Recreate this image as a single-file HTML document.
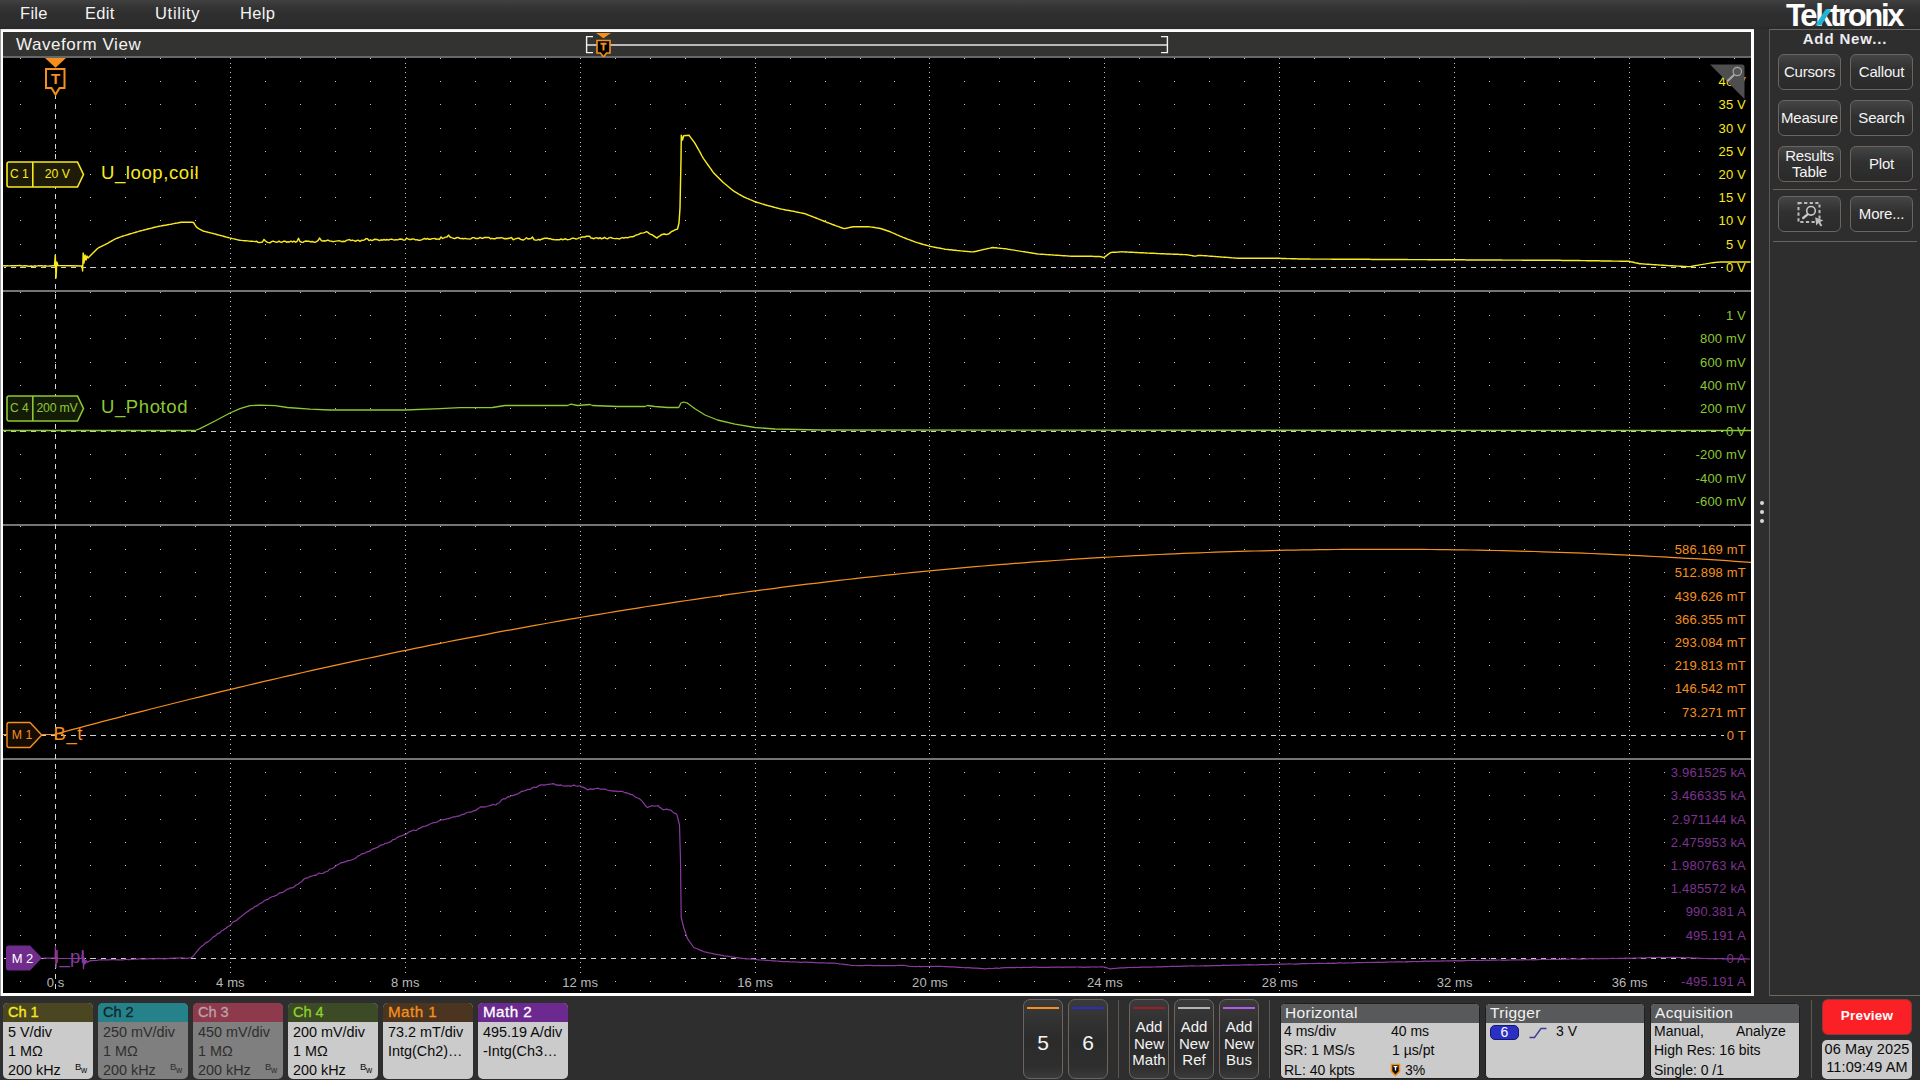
<!DOCTYPE html><html><head><meta charset="utf-8"><title>Waveform View</title><style>
html,body{margin:0;padding:0}
body{width:1920px;height:1080px;overflow:hidden;background:#2e2e2e;font-family:"Liberation Sans",sans-serif;color:#f2f2f2;position:relative}
.abs{position:absolute}
#menubar{left:0;top:0;width:1920px;height:29px;background:linear-gradient(#414141,#343434 25%,#2e2e2e 50%,#2e2e2e 85%,#292929)}
#menubar span{position:absolute;top:4.2px;font-size:16.5px;letter-spacing:.3px;color:#f4f4f4}
#wvborder{left:0;top:29px;width:1754px;height:967px;background:linear-gradient(#e6e6e8,#fff 2px,#fff);box-sizing:border-box;border-left:1px solid #9a9ca0}
#wvtitle{left:3px;top:32px;width:1748px;height:24px;background:#333331;border-bottom:1px solid #66686b}
#wvtitle span{position:absolute;left:13px;top:2.8px;font-size:17px;letter-spacing:.55px;color:#f2f2f2}
#side{left:1769px;top:29px;width:160px;height:967px;border:1px solid #6e6660;border-left-color:#57595c;background:#2e2e2e;box-sizing:border-box}
.btn{position:absolute;width:63px;height:36px;box-sizing:border-box;border:1px solid #6e645e;border-radius:6px;background:linear-gradient(#444546,#303030 45%,#2a2a2a);color:#f4f4f4;font-size:15px;text-align:center;line-height:34px;letter-spacing:-.2px}
.sep{position:absolute;height:1px;background:#6a625c;left:1773px;width:144px}

.badge{position:absolute;top:1003px;width:90px;height:76px;border-radius:5px;overflow:hidden;font-size:14.4px;white-space:nowrap}
.bh{position:absolute;left:0;top:0;width:100%;height:19px;font-size:14.6px;line-height:19px;padding-left:5px;box-sizing:border-box;letter-spacing:-.1px;-webkit-text-stroke:.3px currentColor}
.bl{position:absolute;left:5px;line-height:19px}
.bw{position:absolute;left:72px;top:58px;font-size:9.5px;line-height:12px;letter-spacing:-.3px}
.bw span{font-size:8.5px;position:relative;top:3px}
.tall{position:absolute;top:999px;height:80px;box-sizing:border-box;border:1px solid #6e645e;border-radius:7px;background:linear-gradient(#3a3a3a,#2b2b2b 50%,#2e2e2e 85%,#3a3a3a);color:#f4f4f4;text-align:center}
.tall i{position:absolute;left:3px;right:3px;top:7px;height:2px}
.tall b{font-weight:normal;display:block}
.tall .num{font-size:21px;line-height:24px;margin-top:30.5px}
.tall .add{font-size:15px;line-height:16.2px;margin-top:19.4px}
.vsep{position:absolute;top:1000px;width:1px;height:78px;background:#5d5651}
.info{position:absolute;top:1003px;height:76px;border-radius:5px;overflow:hidden;background:#cbcbcb;color:#0a0a0a;font-size:14px;white-space:nowrap;border:1px solid #1e1e1e;box-sizing:border-box}
.ih{position:absolute;left:0;top:0;width:100%;height:19px;background:#58595b;color:#f2f2f2;font-size:15.5px;line-height:18px;padding-left:4px;box-sizing:border-box;letter-spacing:.3px}
.il{position:absolute;line-height:19px}
</style></head><body>
<div id="menubar" class="abs"><span style="left:20px">File</span><span style="left:85px">Edit</span><span style="left:155px;letter-spacing:.7px">Utility</span><span style="left:240px">Help</span></div>
<div id="wvborder" class="abs"></div>
<div id="wvtitle" class="abs"><span>Waveform View</span></div>
<svg class="abs" style="left:580px;top:32px" width="600" height="26"><path d="M7 13H587" stroke="#b9b9b9" stroke-width="2"/><path d="M593 4.6H586.6V20.6H593M1161 4.6H1167.4V20.6H1161" transform="translate(-580 0)" fill="none" stroke="#f2f2f2" stroke-width="1.4"/><path d="M16 1H31L23.5 6.2Z" fill="#f5901e"/><path d="M17 8.5H30V21H26.5L23.5 25L20.5 21H17Z" fill="#000" stroke="#f5901e" stroke-width="1.6"/><path d="M20.5 11.8H26.5M23.5 11.8V18.5" stroke="#f5901e" stroke-width="2"/></svg>
<svg id="plot" width="1754" height="940" viewBox="0 57 1754 940" style="position:absolute;left:0;top:57px" font-family="Liberation Sans, sans-serif" font-size="13" letter-spacing="0.2">
<rect x="3" y="57" width="1748" height="936" fill="#000"/>
<path d="M20 58h1v1h-1zM55 58h1v1h-1zM90 58h1v1h-1zM125 58h1v1h-1zM160 58h1v1h-1zM195 58h1v1h-1zM230 58h1v1h-1zM265 58h1v1h-1zM300 58h1v1h-1zM335 58h1v1h-1zM370 58h1v1h-1zM405 58h1v1h-1zM440 58h1v1h-1zM475 58h1v1h-1zM510 58h1v1h-1zM545 58h1v1h-1zM580 58h1v1h-1zM615 58h1v1h-1zM650 58h1v1h-1zM685 58h1v1h-1zM720 58h1v1h-1zM755 58h1v1h-1zM790 58h1v1h-1zM825 58h1v1h-1zM860 58h1v1h-1zM894 58h1v1h-1zM929 58h1v1h-1zM964 58h1v1h-1zM999 58h1v1h-1zM1034 58h1v1h-1zM1069 58h1v1h-1zM1104 58h1v1h-1zM1139 58h1v1h-1zM1174 58h1v1h-1zM1209 58h1v1h-1zM1244 58h1v1h-1zM1279 58h1v1h-1zM1314 58h1v1h-1zM1349 58h1v1h-1zM1384 58h1v1h-1zM1419 58h1v1h-1zM1454 58h1v1h-1zM1489 58h1v1h-1zM1524 58h1v1h-1zM1559 58h1v1h-1zM1594 58h1v1h-1zM1629 58h1v1h-1zM1664 58h1v1h-1zM1699 58h1v1h-1zM1734 58h1v1h-1zM20 81h1v1h-1zM55 81h1v1h-1zM90 81h1v1h-1zM125 81h1v1h-1zM160 81h1v1h-1zM195 81h1v1h-1zM230 81h1v1h-1zM265 81h1v1h-1zM300 81h1v1h-1zM335 81h1v1h-1zM370 81h1v1h-1zM405 81h1v1h-1zM440 81h1v1h-1zM475 81h1v1h-1zM510 81h1v1h-1zM545 81h1v1h-1zM580 81h1v1h-1zM615 81h1v1h-1zM650 81h1v1h-1zM685 81h1v1h-1zM720 81h1v1h-1zM755 81h1v1h-1zM790 81h1v1h-1zM825 81h1v1h-1zM860 81h1v1h-1zM894 81h1v1h-1zM929 81h1v1h-1zM964 81h1v1h-1zM999 81h1v1h-1zM1034 81h1v1h-1zM1069 81h1v1h-1zM1104 81h1v1h-1zM1139 81h1v1h-1zM1174 81h1v1h-1zM1209 81h1v1h-1zM1244 81h1v1h-1zM1279 81h1v1h-1zM1314 81h1v1h-1zM1349 81h1v1h-1zM1384 81h1v1h-1zM1419 81h1v1h-1zM1454 81h1v1h-1zM1489 81h1v1h-1zM1524 81h1v1h-1zM1559 81h1v1h-1zM1594 81h1v1h-1zM1629 81h1v1h-1zM1664 81h1v1h-1zM1699 81h1v1h-1zM1734 81h1v1h-1zM20 104h1v1h-1zM55 104h1v1h-1zM90 104h1v1h-1zM125 104h1v1h-1zM160 104h1v1h-1zM195 104h1v1h-1zM230 104h1v1h-1zM265 104h1v1h-1zM300 104h1v1h-1zM335 104h1v1h-1zM370 104h1v1h-1zM405 104h1v1h-1zM440 104h1v1h-1zM475 104h1v1h-1zM510 104h1v1h-1zM545 104h1v1h-1zM580 104h1v1h-1zM615 104h1v1h-1zM650 104h1v1h-1zM685 104h1v1h-1zM720 104h1v1h-1zM755 104h1v1h-1zM790 104h1v1h-1zM825 104h1v1h-1zM860 104h1v1h-1zM894 104h1v1h-1zM929 104h1v1h-1zM964 104h1v1h-1zM999 104h1v1h-1zM1034 104h1v1h-1zM1069 104h1v1h-1zM1104 104h1v1h-1zM1139 104h1v1h-1zM1174 104h1v1h-1zM1209 104h1v1h-1zM1244 104h1v1h-1zM1279 104h1v1h-1zM1314 104h1v1h-1zM1349 104h1v1h-1zM1384 104h1v1h-1zM1419 104h1v1h-1zM1454 104h1v1h-1zM1489 104h1v1h-1zM1524 104h1v1h-1zM1559 104h1v1h-1zM1594 104h1v1h-1zM1629 104h1v1h-1zM1664 104h1v1h-1zM1699 104h1v1h-1zM1734 104h1v1h-1zM20 128h1v1h-1zM55 128h1v1h-1zM90 128h1v1h-1zM125 128h1v1h-1zM160 128h1v1h-1zM195 128h1v1h-1zM230 128h1v1h-1zM265 128h1v1h-1zM300 128h1v1h-1zM335 128h1v1h-1zM370 128h1v1h-1zM405 128h1v1h-1zM440 128h1v1h-1zM475 128h1v1h-1zM510 128h1v1h-1zM545 128h1v1h-1zM580 128h1v1h-1zM615 128h1v1h-1zM650 128h1v1h-1zM685 128h1v1h-1zM720 128h1v1h-1zM755 128h1v1h-1zM790 128h1v1h-1zM825 128h1v1h-1zM860 128h1v1h-1zM894 128h1v1h-1zM929 128h1v1h-1zM964 128h1v1h-1zM999 128h1v1h-1zM1034 128h1v1h-1zM1069 128h1v1h-1zM1104 128h1v1h-1zM1139 128h1v1h-1zM1174 128h1v1h-1zM1209 128h1v1h-1zM1244 128h1v1h-1zM1279 128h1v1h-1zM1314 128h1v1h-1zM1349 128h1v1h-1zM1384 128h1v1h-1zM1419 128h1v1h-1zM1454 128h1v1h-1zM1489 128h1v1h-1zM1524 128h1v1h-1zM1559 128h1v1h-1zM1594 128h1v1h-1zM1629 128h1v1h-1zM1664 128h1v1h-1zM1699 128h1v1h-1zM1734 128h1v1h-1zM20 151h1v1h-1zM55 151h1v1h-1zM90 151h1v1h-1zM125 151h1v1h-1zM160 151h1v1h-1zM195 151h1v1h-1zM230 151h1v1h-1zM265 151h1v1h-1zM300 151h1v1h-1zM335 151h1v1h-1zM370 151h1v1h-1zM405 151h1v1h-1zM440 151h1v1h-1zM475 151h1v1h-1zM510 151h1v1h-1zM545 151h1v1h-1zM580 151h1v1h-1zM615 151h1v1h-1zM650 151h1v1h-1zM685 151h1v1h-1zM720 151h1v1h-1zM755 151h1v1h-1zM790 151h1v1h-1zM825 151h1v1h-1zM860 151h1v1h-1zM894 151h1v1h-1zM929 151h1v1h-1zM964 151h1v1h-1zM999 151h1v1h-1zM1034 151h1v1h-1zM1069 151h1v1h-1zM1104 151h1v1h-1zM1139 151h1v1h-1zM1174 151h1v1h-1zM1209 151h1v1h-1zM1244 151h1v1h-1zM1279 151h1v1h-1zM1314 151h1v1h-1zM1349 151h1v1h-1zM1384 151h1v1h-1zM1419 151h1v1h-1zM1454 151h1v1h-1zM1489 151h1v1h-1zM1524 151h1v1h-1zM1559 151h1v1h-1zM1594 151h1v1h-1zM1629 151h1v1h-1zM1664 151h1v1h-1zM1699 151h1v1h-1zM1734 151h1v1h-1zM20 174h1v1h-1zM55 174h1v1h-1zM90 174h1v1h-1zM125 174h1v1h-1zM160 174h1v1h-1zM195 174h1v1h-1zM230 174h1v1h-1zM265 174h1v1h-1zM300 174h1v1h-1zM335 174h1v1h-1zM370 174h1v1h-1zM405 174h1v1h-1zM440 174h1v1h-1zM475 174h1v1h-1zM510 174h1v1h-1zM545 174h1v1h-1zM580 174h1v1h-1zM615 174h1v1h-1zM650 174h1v1h-1zM685 174h1v1h-1zM720 174h1v1h-1zM755 174h1v1h-1zM790 174h1v1h-1zM825 174h1v1h-1zM860 174h1v1h-1zM894 174h1v1h-1zM929 174h1v1h-1zM964 174h1v1h-1zM999 174h1v1h-1zM1034 174h1v1h-1zM1069 174h1v1h-1zM1104 174h1v1h-1zM1139 174h1v1h-1zM1174 174h1v1h-1zM1209 174h1v1h-1zM1244 174h1v1h-1zM1279 174h1v1h-1zM1314 174h1v1h-1zM1349 174h1v1h-1zM1384 174h1v1h-1zM1419 174h1v1h-1zM1454 174h1v1h-1zM1489 174h1v1h-1zM1524 174h1v1h-1zM1559 174h1v1h-1zM1594 174h1v1h-1zM1629 174h1v1h-1zM1664 174h1v1h-1zM1699 174h1v1h-1zM1734 174h1v1h-1zM20 197h1v1h-1zM55 197h1v1h-1zM90 197h1v1h-1zM125 197h1v1h-1zM160 197h1v1h-1zM195 197h1v1h-1zM230 197h1v1h-1zM265 197h1v1h-1zM300 197h1v1h-1zM335 197h1v1h-1zM370 197h1v1h-1zM405 197h1v1h-1zM440 197h1v1h-1zM475 197h1v1h-1zM510 197h1v1h-1zM545 197h1v1h-1zM580 197h1v1h-1zM615 197h1v1h-1zM650 197h1v1h-1zM685 197h1v1h-1zM720 197h1v1h-1zM755 197h1v1h-1zM790 197h1v1h-1zM825 197h1v1h-1zM860 197h1v1h-1zM894 197h1v1h-1zM929 197h1v1h-1zM964 197h1v1h-1zM999 197h1v1h-1zM1034 197h1v1h-1zM1069 197h1v1h-1zM1104 197h1v1h-1zM1139 197h1v1h-1zM1174 197h1v1h-1zM1209 197h1v1h-1zM1244 197h1v1h-1zM1279 197h1v1h-1zM1314 197h1v1h-1zM1349 197h1v1h-1zM1384 197h1v1h-1zM1419 197h1v1h-1zM1454 197h1v1h-1zM1489 197h1v1h-1zM1524 197h1v1h-1zM1559 197h1v1h-1zM1594 197h1v1h-1zM1629 197h1v1h-1zM1664 197h1v1h-1zM1699 197h1v1h-1zM1734 197h1v1h-1zM20 220h1v1h-1zM55 220h1v1h-1zM90 220h1v1h-1zM125 220h1v1h-1zM160 220h1v1h-1zM195 220h1v1h-1zM230 220h1v1h-1zM265 220h1v1h-1zM300 220h1v1h-1zM335 220h1v1h-1zM370 220h1v1h-1zM405 220h1v1h-1zM440 220h1v1h-1zM475 220h1v1h-1zM510 220h1v1h-1zM545 220h1v1h-1zM580 220h1v1h-1zM615 220h1v1h-1zM650 220h1v1h-1zM685 220h1v1h-1zM720 220h1v1h-1zM755 220h1v1h-1zM790 220h1v1h-1zM825 220h1v1h-1zM860 220h1v1h-1zM894 220h1v1h-1zM929 220h1v1h-1zM964 220h1v1h-1zM999 220h1v1h-1zM1034 220h1v1h-1zM1069 220h1v1h-1zM1104 220h1v1h-1zM1139 220h1v1h-1zM1174 220h1v1h-1zM1209 220h1v1h-1zM1244 220h1v1h-1zM1279 220h1v1h-1zM1314 220h1v1h-1zM1349 220h1v1h-1zM1384 220h1v1h-1zM1419 220h1v1h-1zM1454 220h1v1h-1zM1489 220h1v1h-1zM1524 220h1v1h-1zM1559 220h1v1h-1zM1594 220h1v1h-1zM1629 220h1v1h-1zM1664 220h1v1h-1zM1699 220h1v1h-1zM1734 220h1v1h-1zM20 244h1v1h-1zM55 244h1v1h-1zM90 244h1v1h-1zM125 244h1v1h-1zM160 244h1v1h-1zM195 244h1v1h-1zM230 244h1v1h-1zM265 244h1v1h-1zM300 244h1v1h-1zM335 244h1v1h-1zM370 244h1v1h-1zM405 244h1v1h-1zM440 244h1v1h-1zM475 244h1v1h-1zM510 244h1v1h-1zM545 244h1v1h-1zM580 244h1v1h-1zM615 244h1v1h-1zM650 244h1v1h-1zM685 244h1v1h-1zM720 244h1v1h-1zM755 244h1v1h-1zM790 244h1v1h-1zM825 244h1v1h-1zM860 244h1v1h-1zM894 244h1v1h-1zM929 244h1v1h-1zM964 244h1v1h-1zM999 244h1v1h-1zM1034 244h1v1h-1zM1069 244h1v1h-1zM1104 244h1v1h-1zM1139 244h1v1h-1zM1174 244h1v1h-1zM1209 244h1v1h-1zM1244 244h1v1h-1zM1279 244h1v1h-1zM1314 244h1v1h-1zM1349 244h1v1h-1zM1384 244h1v1h-1zM1419 244h1v1h-1zM1454 244h1v1h-1zM1489 244h1v1h-1zM1524 244h1v1h-1zM1559 244h1v1h-1zM1594 244h1v1h-1zM1629 244h1v1h-1zM1664 244h1v1h-1zM1699 244h1v1h-1zM1734 244h1v1h-1zM20 267h1v1h-1zM55 267h1v1h-1zM90 267h1v1h-1zM125 267h1v1h-1zM160 267h1v1h-1zM195 267h1v1h-1zM230 267h1v1h-1zM265 267h1v1h-1zM300 267h1v1h-1zM335 267h1v1h-1zM370 267h1v1h-1zM405 267h1v1h-1zM440 267h1v1h-1zM475 267h1v1h-1zM510 267h1v1h-1zM545 267h1v1h-1zM580 267h1v1h-1zM615 267h1v1h-1zM650 267h1v1h-1zM685 267h1v1h-1zM720 267h1v1h-1zM755 267h1v1h-1zM790 267h1v1h-1zM825 267h1v1h-1zM860 267h1v1h-1zM894 267h1v1h-1zM929 267h1v1h-1zM964 267h1v1h-1zM999 267h1v1h-1zM1034 267h1v1h-1zM1069 267h1v1h-1zM1104 267h1v1h-1zM1139 267h1v1h-1zM1174 267h1v1h-1zM1209 267h1v1h-1zM1244 267h1v1h-1zM1279 267h1v1h-1zM1314 267h1v1h-1zM1349 267h1v1h-1zM1384 267h1v1h-1zM1419 267h1v1h-1zM1454 267h1v1h-1zM1489 267h1v1h-1zM1524 267h1v1h-1zM1559 267h1v1h-1zM1594 267h1v1h-1zM1629 267h1v1h-1zM1664 267h1v1h-1zM1699 267h1v1h-1zM1734 267h1v1h-1zM230 58h1v1h-1zM405 58h1v1h-1zM580 58h1v1h-1zM755 58h1v1h-1zM929 58h1v1h-1zM1104 58h1v1h-1zM1279 58h1v1h-1zM1454 58h1v1h-1zM1629 58h1v1h-1zM230 63h1v1h-1zM405 63h1v1h-1zM580 63h1v1h-1zM755 63h1v1h-1zM929 63h1v1h-1zM1104 63h1v1h-1zM1279 63h1v1h-1zM1454 63h1v1h-1zM1629 63h1v1h-1zM230 67h1v1h-1zM405 67h1v1h-1zM580 67h1v1h-1zM755 67h1v1h-1zM929 67h1v1h-1zM1104 67h1v1h-1zM1279 67h1v1h-1zM1454 67h1v1h-1zM1629 67h1v1h-1zM230 72h1v1h-1zM405 72h1v1h-1zM580 72h1v1h-1zM755 72h1v1h-1zM929 72h1v1h-1zM1104 72h1v1h-1zM1279 72h1v1h-1zM1454 72h1v1h-1zM1629 72h1v1h-1zM230 77h1v1h-1zM405 77h1v1h-1zM580 77h1v1h-1zM755 77h1v1h-1zM929 77h1v1h-1zM1104 77h1v1h-1zM1279 77h1v1h-1zM1454 77h1v1h-1zM1629 77h1v1h-1zM230 81h1v1h-1zM405 81h1v1h-1zM580 81h1v1h-1zM755 81h1v1h-1zM929 81h1v1h-1zM1104 81h1v1h-1zM1279 81h1v1h-1zM1454 81h1v1h-1zM1629 81h1v1h-1zM230 86h1v1h-1zM405 86h1v1h-1zM580 86h1v1h-1zM755 86h1v1h-1zM929 86h1v1h-1zM1104 86h1v1h-1zM1279 86h1v1h-1zM1454 86h1v1h-1zM1629 86h1v1h-1zM230 90h1v1h-1zM405 90h1v1h-1zM580 90h1v1h-1zM755 90h1v1h-1zM929 90h1v1h-1zM1104 90h1v1h-1zM1279 90h1v1h-1zM1454 90h1v1h-1zM1629 90h1v1h-1zM230 95h1v1h-1zM405 95h1v1h-1zM580 95h1v1h-1zM755 95h1v1h-1zM929 95h1v1h-1zM1104 95h1v1h-1zM1279 95h1v1h-1zM1454 95h1v1h-1zM1629 95h1v1h-1zM230 100h1v1h-1zM405 100h1v1h-1zM580 100h1v1h-1zM755 100h1v1h-1zM929 100h1v1h-1zM1104 100h1v1h-1zM1279 100h1v1h-1zM1454 100h1v1h-1zM1629 100h1v1h-1zM230 104h1v1h-1zM405 104h1v1h-1zM580 104h1v1h-1zM755 104h1v1h-1zM929 104h1v1h-1zM1104 104h1v1h-1zM1279 104h1v1h-1zM1454 104h1v1h-1zM1629 104h1v1h-1zM230 109h1v1h-1zM405 109h1v1h-1zM580 109h1v1h-1zM755 109h1v1h-1zM929 109h1v1h-1zM1104 109h1v1h-1zM1279 109h1v1h-1zM1454 109h1v1h-1zM1629 109h1v1h-1zM230 114h1v1h-1zM405 114h1v1h-1zM580 114h1v1h-1zM755 114h1v1h-1zM929 114h1v1h-1zM1104 114h1v1h-1zM1279 114h1v1h-1zM1454 114h1v1h-1zM1629 114h1v1h-1zM230 118h1v1h-1zM405 118h1v1h-1zM580 118h1v1h-1zM755 118h1v1h-1zM929 118h1v1h-1zM1104 118h1v1h-1zM1279 118h1v1h-1zM1454 118h1v1h-1zM1629 118h1v1h-1zM230 123h1v1h-1zM405 123h1v1h-1zM580 123h1v1h-1zM755 123h1v1h-1zM929 123h1v1h-1zM1104 123h1v1h-1zM1279 123h1v1h-1zM1454 123h1v1h-1zM1629 123h1v1h-1zM230 128h1v1h-1zM405 128h1v1h-1zM580 128h1v1h-1zM755 128h1v1h-1zM929 128h1v1h-1zM1104 128h1v1h-1zM1279 128h1v1h-1zM1454 128h1v1h-1zM1629 128h1v1h-1zM230 132h1v1h-1zM405 132h1v1h-1zM580 132h1v1h-1zM755 132h1v1h-1zM929 132h1v1h-1zM1104 132h1v1h-1zM1279 132h1v1h-1zM1454 132h1v1h-1zM1629 132h1v1h-1zM230 137h1v1h-1zM405 137h1v1h-1zM580 137h1v1h-1zM755 137h1v1h-1zM929 137h1v1h-1zM1104 137h1v1h-1zM1279 137h1v1h-1zM1454 137h1v1h-1zM1629 137h1v1h-1zM230 142h1v1h-1zM405 142h1v1h-1zM580 142h1v1h-1zM755 142h1v1h-1zM929 142h1v1h-1zM1104 142h1v1h-1zM1279 142h1v1h-1zM1454 142h1v1h-1zM1629 142h1v1h-1zM230 146h1v1h-1zM405 146h1v1h-1zM580 146h1v1h-1zM755 146h1v1h-1zM929 146h1v1h-1zM1104 146h1v1h-1zM1279 146h1v1h-1zM1454 146h1v1h-1zM1629 146h1v1h-1zM230 151h1v1h-1zM405 151h1v1h-1zM580 151h1v1h-1zM755 151h1v1h-1zM929 151h1v1h-1zM1104 151h1v1h-1zM1279 151h1v1h-1zM1454 151h1v1h-1zM1629 151h1v1h-1zM230 155h1v1h-1zM405 155h1v1h-1zM580 155h1v1h-1zM755 155h1v1h-1zM929 155h1v1h-1zM1104 155h1v1h-1zM1279 155h1v1h-1zM1454 155h1v1h-1zM1629 155h1v1h-1zM230 160h1v1h-1zM405 160h1v1h-1zM580 160h1v1h-1zM755 160h1v1h-1zM929 160h1v1h-1zM1104 160h1v1h-1zM1279 160h1v1h-1zM1454 160h1v1h-1zM1629 160h1v1h-1zM230 165h1v1h-1zM405 165h1v1h-1zM580 165h1v1h-1zM755 165h1v1h-1zM929 165h1v1h-1zM1104 165h1v1h-1zM1279 165h1v1h-1zM1454 165h1v1h-1zM1629 165h1v1h-1zM230 169h1v1h-1zM405 169h1v1h-1zM580 169h1v1h-1zM755 169h1v1h-1zM929 169h1v1h-1zM1104 169h1v1h-1zM1279 169h1v1h-1zM1454 169h1v1h-1zM1629 169h1v1h-1zM230 174h1v1h-1zM405 174h1v1h-1zM580 174h1v1h-1zM755 174h1v1h-1zM929 174h1v1h-1zM1104 174h1v1h-1zM1279 174h1v1h-1zM1454 174h1v1h-1zM1629 174h1v1h-1zM230 179h1v1h-1zM405 179h1v1h-1zM580 179h1v1h-1zM755 179h1v1h-1zM929 179h1v1h-1zM1104 179h1v1h-1zM1279 179h1v1h-1zM1454 179h1v1h-1zM1629 179h1v1h-1zM230 183h1v1h-1zM405 183h1v1h-1zM580 183h1v1h-1zM755 183h1v1h-1zM929 183h1v1h-1zM1104 183h1v1h-1zM1279 183h1v1h-1zM1454 183h1v1h-1zM1629 183h1v1h-1zM230 188h1v1h-1zM405 188h1v1h-1zM580 188h1v1h-1zM755 188h1v1h-1zM929 188h1v1h-1zM1104 188h1v1h-1zM1279 188h1v1h-1zM1454 188h1v1h-1zM1629 188h1v1h-1zM230 193h1v1h-1zM405 193h1v1h-1zM580 193h1v1h-1zM755 193h1v1h-1zM929 193h1v1h-1zM1104 193h1v1h-1zM1279 193h1v1h-1zM1454 193h1v1h-1zM1629 193h1v1h-1zM230 197h1v1h-1zM405 197h1v1h-1zM580 197h1v1h-1zM755 197h1v1h-1zM929 197h1v1h-1zM1104 197h1v1h-1zM1279 197h1v1h-1zM1454 197h1v1h-1zM1629 197h1v1h-1zM230 202h1v1h-1zM405 202h1v1h-1zM580 202h1v1h-1zM755 202h1v1h-1zM929 202h1v1h-1zM1104 202h1v1h-1zM1279 202h1v1h-1zM1454 202h1v1h-1zM1629 202h1v1h-1zM230 206h1v1h-1zM405 206h1v1h-1zM580 206h1v1h-1zM755 206h1v1h-1zM929 206h1v1h-1zM1104 206h1v1h-1zM1279 206h1v1h-1zM1454 206h1v1h-1zM1629 206h1v1h-1zM230 211h1v1h-1zM405 211h1v1h-1zM580 211h1v1h-1zM755 211h1v1h-1zM929 211h1v1h-1zM1104 211h1v1h-1zM1279 211h1v1h-1zM1454 211h1v1h-1zM1629 211h1v1h-1zM230 216h1v1h-1zM405 216h1v1h-1zM580 216h1v1h-1zM755 216h1v1h-1zM929 216h1v1h-1zM1104 216h1v1h-1zM1279 216h1v1h-1zM1454 216h1v1h-1zM1629 216h1v1h-1zM230 220h1v1h-1zM405 220h1v1h-1zM580 220h1v1h-1zM755 220h1v1h-1zM929 220h1v1h-1zM1104 220h1v1h-1zM1279 220h1v1h-1zM1454 220h1v1h-1zM1629 220h1v1h-1zM230 225h1v1h-1zM405 225h1v1h-1zM580 225h1v1h-1zM755 225h1v1h-1zM929 225h1v1h-1zM1104 225h1v1h-1zM1279 225h1v1h-1zM1454 225h1v1h-1zM1629 225h1v1h-1zM230 230h1v1h-1zM405 230h1v1h-1zM580 230h1v1h-1zM755 230h1v1h-1zM929 230h1v1h-1zM1104 230h1v1h-1zM1279 230h1v1h-1zM1454 230h1v1h-1zM1629 230h1v1h-1zM230 234h1v1h-1zM405 234h1v1h-1zM580 234h1v1h-1zM755 234h1v1h-1zM929 234h1v1h-1zM1104 234h1v1h-1zM1279 234h1v1h-1zM1454 234h1v1h-1zM1629 234h1v1h-1zM230 239h1v1h-1zM405 239h1v1h-1zM580 239h1v1h-1zM755 239h1v1h-1zM929 239h1v1h-1zM1104 239h1v1h-1zM1279 239h1v1h-1zM1454 239h1v1h-1zM1629 239h1v1h-1zM230 244h1v1h-1zM405 244h1v1h-1zM580 244h1v1h-1zM755 244h1v1h-1zM929 244h1v1h-1zM1104 244h1v1h-1zM1279 244h1v1h-1zM1454 244h1v1h-1zM1629 244h1v1h-1zM230 248h1v1h-1zM405 248h1v1h-1zM580 248h1v1h-1zM755 248h1v1h-1zM929 248h1v1h-1zM1104 248h1v1h-1zM1279 248h1v1h-1zM1454 248h1v1h-1zM1629 248h1v1h-1zM230 253h1v1h-1zM405 253h1v1h-1zM580 253h1v1h-1zM755 253h1v1h-1zM929 253h1v1h-1zM1104 253h1v1h-1zM1279 253h1v1h-1zM1454 253h1v1h-1zM1629 253h1v1h-1zM230 258h1v1h-1zM405 258h1v1h-1zM580 258h1v1h-1zM755 258h1v1h-1zM929 258h1v1h-1zM1104 258h1v1h-1zM1279 258h1v1h-1zM1454 258h1v1h-1zM1629 258h1v1h-1zM230 262h1v1h-1zM405 262h1v1h-1zM580 262h1v1h-1zM755 262h1v1h-1zM929 262h1v1h-1zM1104 262h1v1h-1zM1279 262h1v1h-1zM1454 262h1v1h-1zM1629 262h1v1h-1zM230 267h1v1h-1zM405 267h1v1h-1zM580 267h1v1h-1zM755 267h1v1h-1zM929 267h1v1h-1zM1104 267h1v1h-1zM1279 267h1v1h-1zM1454 267h1v1h-1zM1629 267h1v1h-1zM230 271h1v1h-1zM405 271h1v1h-1zM580 271h1v1h-1zM755 271h1v1h-1zM929 271h1v1h-1zM1104 271h1v1h-1zM1279 271h1v1h-1zM1454 271h1v1h-1zM1629 271h1v1h-1zM230 276h1v1h-1zM405 276h1v1h-1zM580 276h1v1h-1zM755 276h1v1h-1zM929 276h1v1h-1zM1104 276h1v1h-1zM1279 276h1v1h-1zM1454 276h1v1h-1zM1629 276h1v1h-1zM230 281h1v1h-1zM405 281h1v1h-1zM580 281h1v1h-1zM755 281h1v1h-1zM929 281h1v1h-1zM1104 281h1v1h-1zM1279 281h1v1h-1zM1454 281h1v1h-1zM1629 281h1v1h-1zM230 285h1v1h-1zM405 285h1v1h-1zM580 285h1v1h-1zM755 285h1v1h-1zM929 285h1v1h-1zM1104 285h1v1h-1zM1279 285h1v1h-1zM1454 285h1v1h-1zM1629 285h1v1h-1zM20 292h1v1h-1zM55 292h1v1h-1zM90 292h1v1h-1zM125 292h1v1h-1zM160 292h1v1h-1zM195 292h1v1h-1zM230 292h1v1h-1zM265 292h1v1h-1zM300 292h1v1h-1zM335 292h1v1h-1zM370 292h1v1h-1zM405 292h1v1h-1zM440 292h1v1h-1zM475 292h1v1h-1zM510 292h1v1h-1zM545 292h1v1h-1zM580 292h1v1h-1zM615 292h1v1h-1zM650 292h1v1h-1zM685 292h1v1h-1zM720 292h1v1h-1zM755 292h1v1h-1zM790 292h1v1h-1zM825 292h1v1h-1zM860 292h1v1h-1zM894 292h1v1h-1zM929 292h1v1h-1zM964 292h1v1h-1zM999 292h1v1h-1zM1034 292h1v1h-1zM1069 292h1v1h-1zM1104 292h1v1h-1zM1139 292h1v1h-1zM1174 292h1v1h-1zM1209 292h1v1h-1zM1244 292h1v1h-1zM1279 292h1v1h-1zM1314 292h1v1h-1zM1349 292h1v1h-1zM1384 292h1v1h-1zM1419 292h1v1h-1zM1454 292h1v1h-1zM1489 292h1v1h-1zM1524 292h1v1h-1zM1559 292h1v1h-1zM1594 292h1v1h-1zM1629 292h1v1h-1zM1664 292h1v1h-1zM1699 292h1v1h-1zM1734 292h1v1h-1zM20 315h1v1h-1zM55 315h1v1h-1zM90 315h1v1h-1zM125 315h1v1h-1zM160 315h1v1h-1zM195 315h1v1h-1zM230 315h1v1h-1zM265 315h1v1h-1zM300 315h1v1h-1zM335 315h1v1h-1zM370 315h1v1h-1zM405 315h1v1h-1zM440 315h1v1h-1zM475 315h1v1h-1zM510 315h1v1h-1zM545 315h1v1h-1zM580 315h1v1h-1zM615 315h1v1h-1zM650 315h1v1h-1zM685 315h1v1h-1zM720 315h1v1h-1zM755 315h1v1h-1zM790 315h1v1h-1zM825 315h1v1h-1zM860 315h1v1h-1zM894 315h1v1h-1zM929 315h1v1h-1zM964 315h1v1h-1zM999 315h1v1h-1zM1034 315h1v1h-1zM1069 315h1v1h-1zM1104 315h1v1h-1zM1139 315h1v1h-1zM1174 315h1v1h-1zM1209 315h1v1h-1zM1244 315h1v1h-1zM1279 315h1v1h-1zM1314 315h1v1h-1zM1349 315h1v1h-1zM1384 315h1v1h-1zM1419 315h1v1h-1zM1454 315h1v1h-1zM1489 315h1v1h-1zM1524 315h1v1h-1zM1559 315h1v1h-1zM1594 315h1v1h-1zM1629 315h1v1h-1zM1664 315h1v1h-1zM1699 315h1v1h-1zM1734 315h1v1h-1zM20 338h1v1h-1zM55 338h1v1h-1zM90 338h1v1h-1zM125 338h1v1h-1zM160 338h1v1h-1zM195 338h1v1h-1zM230 338h1v1h-1zM265 338h1v1h-1zM300 338h1v1h-1zM335 338h1v1h-1zM370 338h1v1h-1zM405 338h1v1h-1zM440 338h1v1h-1zM475 338h1v1h-1zM510 338h1v1h-1zM545 338h1v1h-1zM580 338h1v1h-1zM615 338h1v1h-1zM650 338h1v1h-1zM685 338h1v1h-1zM720 338h1v1h-1zM755 338h1v1h-1zM790 338h1v1h-1zM825 338h1v1h-1zM860 338h1v1h-1zM894 338h1v1h-1zM929 338h1v1h-1zM964 338h1v1h-1zM999 338h1v1h-1zM1034 338h1v1h-1zM1069 338h1v1h-1zM1104 338h1v1h-1zM1139 338h1v1h-1zM1174 338h1v1h-1zM1209 338h1v1h-1zM1244 338h1v1h-1zM1279 338h1v1h-1zM1314 338h1v1h-1zM1349 338h1v1h-1zM1384 338h1v1h-1zM1419 338h1v1h-1zM1454 338h1v1h-1zM1489 338h1v1h-1zM1524 338h1v1h-1zM1559 338h1v1h-1zM1594 338h1v1h-1zM1629 338h1v1h-1zM1664 338h1v1h-1zM1699 338h1v1h-1zM1734 338h1v1h-1zM20 362h1v1h-1zM55 362h1v1h-1zM90 362h1v1h-1zM125 362h1v1h-1zM160 362h1v1h-1zM195 362h1v1h-1zM230 362h1v1h-1zM265 362h1v1h-1zM300 362h1v1h-1zM335 362h1v1h-1zM370 362h1v1h-1zM405 362h1v1h-1zM440 362h1v1h-1zM475 362h1v1h-1zM510 362h1v1h-1zM545 362h1v1h-1zM580 362h1v1h-1zM615 362h1v1h-1zM650 362h1v1h-1zM685 362h1v1h-1zM720 362h1v1h-1zM755 362h1v1h-1zM790 362h1v1h-1zM825 362h1v1h-1zM860 362h1v1h-1zM894 362h1v1h-1zM929 362h1v1h-1zM964 362h1v1h-1zM999 362h1v1h-1zM1034 362h1v1h-1zM1069 362h1v1h-1zM1104 362h1v1h-1zM1139 362h1v1h-1zM1174 362h1v1h-1zM1209 362h1v1h-1zM1244 362h1v1h-1zM1279 362h1v1h-1zM1314 362h1v1h-1zM1349 362h1v1h-1zM1384 362h1v1h-1zM1419 362h1v1h-1zM1454 362h1v1h-1zM1489 362h1v1h-1zM1524 362h1v1h-1zM1559 362h1v1h-1zM1594 362h1v1h-1zM1629 362h1v1h-1zM1664 362h1v1h-1zM1699 362h1v1h-1zM1734 362h1v1h-1zM20 385h1v1h-1zM55 385h1v1h-1zM90 385h1v1h-1zM125 385h1v1h-1zM160 385h1v1h-1zM195 385h1v1h-1zM230 385h1v1h-1zM265 385h1v1h-1zM300 385h1v1h-1zM335 385h1v1h-1zM370 385h1v1h-1zM405 385h1v1h-1zM440 385h1v1h-1zM475 385h1v1h-1zM510 385h1v1h-1zM545 385h1v1h-1zM580 385h1v1h-1zM615 385h1v1h-1zM650 385h1v1h-1zM685 385h1v1h-1zM720 385h1v1h-1zM755 385h1v1h-1zM790 385h1v1h-1zM825 385h1v1h-1zM860 385h1v1h-1zM894 385h1v1h-1zM929 385h1v1h-1zM964 385h1v1h-1zM999 385h1v1h-1zM1034 385h1v1h-1zM1069 385h1v1h-1zM1104 385h1v1h-1zM1139 385h1v1h-1zM1174 385h1v1h-1zM1209 385h1v1h-1zM1244 385h1v1h-1zM1279 385h1v1h-1zM1314 385h1v1h-1zM1349 385h1v1h-1zM1384 385h1v1h-1zM1419 385h1v1h-1zM1454 385h1v1h-1zM1489 385h1v1h-1zM1524 385h1v1h-1zM1559 385h1v1h-1zM1594 385h1v1h-1zM1629 385h1v1h-1zM1664 385h1v1h-1zM1699 385h1v1h-1zM1734 385h1v1h-1zM20 408h1v1h-1zM55 408h1v1h-1zM90 408h1v1h-1zM125 408h1v1h-1zM160 408h1v1h-1zM195 408h1v1h-1zM230 408h1v1h-1zM265 408h1v1h-1zM300 408h1v1h-1zM335 408h1v1h-1zM370 408h1v1h-1zM405 408h1v1h-1zM440 408h1v1h-1zM475 408h1v1h-1zM510 408h1v1h-1zM545 408h1v1h-1zM580 408h1v1h-1zM615 408h1v1h-1zM650 408h1v1h-1zM685 408h1v1h-1zM720 408h1v1h-1zM755 408h1v1h-1zM790 408h1v1h-1zM825 408h1v1h-1zM860 408h1v1h-1zM894 408h1v1h-1zM929 408h1v1h-1zM964 408h1v1h-1zM999 408h1v1h-1zM1034 408h1v1h-1zM1069 408h1v1h-1zM1104 408h1v1h-1zM1139 408h1v1h-1zM1174 408h1v1h-1zM1209 408h1v1h-1zM1244 408h1v1h-1zM1279 408h1v1h-1zM1314 408h1v1h-1zM1349 408h1v1h-1zM1384 408h1v1h-1zM1419 408h1v1h-1zM1454 408h1v1h-1zM1489 408h1v1h-1zM1524 408h1v1h-1zM1559 408h1v1h-1zM1594 408h1v1h-1zM1629 408h1v1h-1zM1664 408h1v1h-1zM1699 408h1v1h-1zM1734 408h1v1h-1zM20 431h1v1h-1zM55 431h1v1h-1zM90 431h1v1h-1zM125 431h1v1h-1zM160 431h1v1h-1zM195 431h1v1h-1zM230 431h1v1h-1zM265 431h1v1h-1zM300 431h1v1h-1zM335 431h1v1h-1zM370 431h1v1h-1zM405 431h1v1h-1zM440 431h1v1h-1zM475 431h1v1h-1zM510 431h1v1h-1zM545 431h1v1h-1zM580 431h1v1h-1zM615 431h1v1h-1zM650 431h1v1h-1zM685 431h1v1h-1zM720 431h1v1h-1zM755 431h1v1h-1zM790 431h1v1h-1zM825 431h1v1h-1zM860 431h1v1h-1zM894 431h1v1h-1zM929 431h1v1h-1zM964 431h1v1h-1zM999 431h1v1h-1zM1034 431h1v1h-1zM1069 431h1v1h-1zM1104 431h1v1h-1zM1139 431h1v1h-1zM1174 431h1v1h-1zM1209 431h1v1h-1zM1244 431h1v1h-1zM1279 431h1v1h-1zM1314 431h1v1h-1zM1349 431h1v1h-1zM1384 431h1v1h-1zM1419 431h1v1h-1zM1454 431h1v1h-1zM1489 431h1v1h-1zM1524 431h1v1h-1zM1559 431h1v1h-1zM1594 431h1v1h-1zM1629 431h1v1h-1zM1664 431h1v1h-1zM1699 431h1v1h-1zM1734 431h1v1h-1zM20 454h1v1h-1zM55 454h1v1h-1zM90 454h1v1h-1zM125 454h1v1h-1zM160 454h1v1h-1zM195 454h1v1h-1zM230 454h1v1h-1zM265 454h1v1h-1zM300 454h1v1h-1zM335 454h1v1h-1zM370 454h1v1h-1zM405 454h1v1h-1zM440 454h1v1h-1zM475 454h1v1h-1zM510 454h1v1h-1zM545 454h1v1h-1zM580 454h1v1h-1zM615 454h1v1h-1zM650 454h1v1h-1zM685 454h1v1h-1zM720 454h1v1h-1zM755 454h1v1h-1zM790 454h1v1h-1zM825 454h1v1h-1zM860 454h1v1h-1zM894 454h1v1h-1zM929 454h1v1h-1zM964 454h1v1h-1zM999 454h1v1h-1zM1034 454h1v1h-1zM1069 454h1v1h-1zM1104 454h1v1h-1zM1139 454h1v1h-1zM1174 454h1v1h-1zM1209 454h1v1h-1zM1244 454h1v1h-1zM1279 454h1v1h-1zM1314 454h1v1h-1zM1349 454h1v1h-1zM1384 454h1v1h-1zM1419 454h1v1h-1zM1454 454h1v1h-1zM1489 454h1v1h-1zM1524 454h1v1h-1zM1559 454h1v1h-1zM1594 454h1v1h-1zM1629 454h1v1h-1zM1664 454h1v1h-1zM1699 454h1v1h-1zM1734 454h1v1h-1zM20 478h1v1h-1zM55 478h1v1h-1zM90 478h1v1h-1zM125 478h1v1h-1zM160 478h1v1h-1zM195 478h1v1h-1zM230 478h1v1h-1zM265 478h1v1h-1zM300 478h1v1h-1zM335 478h1v1h-1zM370 478h1v1h-1zM405 478h1v1h-1zM440 478h1v1h-1zM475 478h1v1h-1zM510 478h1v1h-1zM545 478h1v1h-1zM580 478h1v1h-1zM615 478h1v1h-1zM650 478h1v1h-1zM685 478h1v1h-1zM720 478h1v1h-1zM755 478h1v1h-1zM790 478h1v1h-1zM825 478h1v1h-1zM860 478h1v1h-1zM894 478h1v1h-1zM929 478h1v1h-1zM964 478h1v1h-1zM999 478h1v1h-1zM1034 478h1v1h-1zM1069 478h1v1h-1zM1104 478h1v1h-1zM1139 478h1v1h-1zM1174 478h1v1h-1zM1209 478h1v1h-1zM1244 478h1v1h-1zM1279 478h1v1h-1zM1314 478h1v1h-1zM1349 478h1v1h-1zM1384 478h1v1h-1zM1419 478h1v1h-1zM1454 478h1v1h-1zM1489 478h1v1h-1zM1524 478h1v1h-1zM1559 478h1v1h-1zM1594 478h1v1h-1zM1629 478h1v1h-1zM1664 478h1v1h-1zM1699 478h1v1h-1zM1734 478h1v1h-1zM20 501h1v1h-1zM55 501h1v1h-1zM90 501h1v1h-1zM125 501h1v1h-1zM160 501h1v1h-1zM195 501h1v1h-1zM230 501h1v1h-1zM265 501h1v1h-1zM300 501h1v1h-1zM335 501h1v1h-1zM370 501h1v1h-1zM405 501h1v1h-1zM440 501h1v1h-1zM475 501h1v1h-1zM510 501h1v1h-1zM545 501h1v1h-1zM580 501h1v1h-1zM615 501h1v1h-1zM650 501h1v1h-1zM685 501h1v1h-1zM720 501h1v1h-1zM755 501h1v1h-1zM790 501h1v1h-1zM825 501h1v1h-1zM860 501h1v1h-1zM894 501h1v1h-1zM929 501h1v1h-1zM964 501h1v1h-1zM999 501h1v1h-1zM1034 501h1v1h-1zM1069 501h1v1h-1zM1104 501h1v1h-1zM1139 501h1v1h-1zM1174 501h1v1h-1zM1209 501h1v1h-1zM1244 501h1v1h-1zM1279 501h1v1h-1zM1314 501h1v1h-1zM1349 501h1v1h-1zM1384 501h1v1h-1zM1419 501h1v1h-1zM1454 501h1v1h-1zM1489 501h1v1h-1zM1524 501h1v1h-1zM1559 501h1v1h-1zM1594 501h1v1h-1zM1629 501h1v1h-1zM1664 501h1v1h-1zM1699 501h1v1h-1zM1734 501h1v1h-1zM230 292h1v1h-1zM405 292h1v1h-1zM580 292h1v1h-1zM755 292h1v1h-1zM929 292h1v1h-1zM1104 292h1v1h-1zM1279 292h1v1h-1zM1454 292h1v1h-1zM1629 292h1v1h-1zM230 297h1v1h-1zM405 297h1v1h-1zM580 297h1v1h-1zM755 297h1v1h-1zM929 297h1v1h-1zM1104 297h1v1h-1zM1279 297h1v1h-1zM1454 297h1v1h-1zM1629 297h1v1h-1zM230 301h1v1h-1zM405 301h1v1h-1zM580 301h1v1h-1zM755 301h1v1h-1zM929 301h1v1h-1zM1104 301h1v1h-1zM1279 301h1v1h-1zM1454 301h1v1h-1zM1629 301h1v1h-1zM230 306h1v1h-1zM405 306h1v1h-1zM580 306h1v1h-1zM755 306h1v1h-1zM929 306h1v1h-1zM1104 306h1v1h-1zM1279 306h1v1h-1zM1454 306h1v1h-1zM1629 306h1v1h-1zM230 311h1v1h-1zM405 311h1v1h-1zM580 311h1v1h-1zM755 311h1v1h-1zM929 311h1v1h-1zM1104 311h1v1h-1zM1279 311h1v1h-1zM1454 311h1v1h-1zM1629 311h1v1h-1zM230 315h1v1h-1zM405 315h1v1h-1zM580 315h1v1h-1zM755 315h1v1h-1zM929 315h1v1h-1zM1104 315h1v1h-1zM1279 315h1v1h-1zM1454 315h1v1h-1zM1629 315h1v1h-1zM230 320h1v1h-1zM405 320h1v1h-1zM580 320h1v1h-1zM755 320h1v1h-1zM929 320h1v1h-1zM1104 320h1v1h-1zM1279 320h1v1h-1zM1454 320h1v1h-1zM1629 320h1v1h-1zM230 324h1v1h-1zM405 324h1v1h-1zM580 324h1v1h-1zM755 324h1v1h-1zM929 324h1v1h-1zM1104 324h1v1h-1zM1279 324h1v1h-1zM1454 324h1v1h-1zM1629 324h1v1h-1zM230 329h1v1h-1zM405 329h1v1h-1zM580 329h1v1h-1zM755 329h1v1h-1zM929 329h1v1h-1zM1104 329h1v1h-1zM1279 329h1v1h-1zM1454 329h1v1h-1zM1629 329h1v1h-1zM230 334h1v1h-1zM405 334h1v1h-1zM580 334h1v1h-1zM755 334h1v1h-1zM929 334h1v1h-1zM1104 334h1v1h-1zM1279 334h1v1h-1zM1454 334h1v1h-1zM1629 334h1v1h-1zM230 338h1v1h-1zM405 338h1v1h-1zM580 338h1v1h-1zM755 338h1v1h-1zM929 338h1v1h-1zM1104 338h1v1h-1zM1279 338h1v1h-1zM1454 338h1v1h-1zM1629 338h1v1h-1zM230 343h1v1h-1zM405 343h1v1h-1zM580 343h1v1h-1zM755 343h1v1h-1zM929 343h1v1h-1zM1104 343h1v1h-1zM1279 343h1v1h-1zM1454 343h1v1h-1zM1629 343h1v1h-1zM230 348h1v1h-1zM405 348h1v1h-1zM580 348h1v1h-1zM755 348h1v1h-1zM929 348h1v1h-1zM1104 348h1v1h-1zM1279 348h1v1h-1zM1454 348h1v1h-1zM1629 348h1v1h-1zM230 352h1v1h-1zM405 352h1v1h-1zM580 352h1v1h-1zM755 352h1v1h-1zM929 352h1v1h-1zM1104 352h1v1h-1zM1279 352h1v1h-1zM1454 352h1v1h-1zM1629 352h1v1h-1zM230 357h1v1h-1zM405 357h1v1h-1zM580 357h1v1h-1zM755 357h1v1h-1zM929 357h1v1h-1zM1104 357h1v1h-1zM1279 357h1v1h-1zM1454 357h1v1h-1zM1629 357h1v1h-1zM230 362h1v1h-1zM405 362h1v1h-1zM580 362h1v1h-1zM755 362h1v1h-1zM929 362h1v1h-1zM1104 362h1v1h-1zM1279 362h1v1h-1zM1454 362h1v1h-1zM1629 362h1v1h-1zM230 366h1v1h-1zM405 366h1v1h-1zM580 366h1v1h-1zM755 366h1v1h-1zM929 366h1v1h-1zM1104 366h1v1h-1zM1279 366h1v1h-1zM1454 366h1v1h-1zM1629 366h1v1h-1zM230 371h1v1h-1zM405 371h1v1h-1zM580 371h1v1h-1zM755 371h1v1h-1zM929 371h1v1h-1zM1104 371h1v1h-1zM1279 371h1v1h-1zM1454 371h1v1h-1zM1629 371h1v1h-1zM230 376h1v1h-1zM405 376h1v1h-1zM580 376h1v1h-1zM755 376h1v1h-1zM929 376h1v1h-1zM1104 376h1v1h-1zM1279 376h1v1h-1zM1454 376h1v1h-1zM1629 376h1v1h-1zM230 380h1v1h-1zM405 380h1v1h-1zM580 380h1v1h-1zM755 380h1v1h-1zM929 380h1v1h-1zM1104 380h1v1h-1zM1279 380h1v1h-1zM1454 380h1v1h-1zM1629 380h1v1h-1zM230 385h1v1h-1zM405 385h1v1h-1zM580 385h1v1h-1zM755 385h1v1h-1zM929 385h1v1h-1zM1104 385h1v1h-1zM1279 385h1v1h-1zM1454 385h1v1h-1zM1629 385h1v1h-1zM230 389h1v1h-1zM405 389h1v1h-1zM580 389h1v1h-1zM755 389h1v1h-1zM929 389h1v1h-1zM1104 389h1v1h-1zM1279 389h1v1h-1zM1454 389h1v1h-1zM1629 389h1v1h-1zM230 394h1v1h-1zM405 394h1v1h-1zM580 394h1v1h-1zM755 394h1v1h-1zM929 394h1v1h-1zM1104 394h1v1h-1zM1279 394h1v1h-1zM1454 394h1v1h-1zM1629 394h1v1h-1zM230 399h1v1h-1zM405 399h1v1h-1zM580 399h1v1h-1zM755 399h1v1h-1zM929 399h1v1h-1zM1104 399h1v1h-1zM1279 399h1v1h-1zM1454 399h1v1h-1zM1629 399h1v1h-1zM230 403h1v1h-1zM405 403h1v1h-1zM580 403h1v1h-1zM755 403h1v1h-1zM929 403h1v1h-1zM1104 403h1v1h-1zM1279 403h1v1h-1zM1454 403h1v1h-1zM1629 403h1v1h-1zM230 408h1v1h-1zM405 408h1v1h-1zM580 408h1v1h-1zM755 408h1v1h-1zM929 408h1v1h-1zM1104 408h1v1h-1zM1279 408h1v1h-1zM1454 408h1v1h-1zM1629 408h1v1h-1zM230 413h1v1h-1zM405 413h1v1h-1zM580 413h1v1h-1zM755 413h1v1h-1zM929 413h1v1h-1zM1104 413h1v1h-1zM1279 413h1v1h-1zM1454 413h1v1h-1zM1629 413h1v1h-1zM230 417h1v1h-1zM405 417h1v1h-1zM580 417h1v1h-1zM755 417h1v1h-1zM929 417h1v1h-1zM1104 417h1v1h-1zM1279 417h1v1h-1zM1454 417h1v1h-1zM1629 417h1v1h-1zM230 422h1v1h-1zM405 422h1v1h-1zM580 422h1v1h-1zM755 422h1v1h-1zM929 422h1v1h-1zM1104 422h1v1h-1zM1279 422h1v1h-1zM1454 422h1v1h-1zM1629 422h1v1h-1zM230 427h1v1h-1zM405 427h1v1h-1zM580 427h1v1h-1zM755 427h1v1h-1zM929 427h1v1h-1zM1104 427h1v1h-1zM1279 427h1v1h-1zM1454 427h1v1h-1zM1629 427h1v1h-1zM230 431h1v1h-1zM405 431h1v1h-1zM580 431h1v1h-1zM755 431h1v1h-1zM929 431h1v1h-1zM1104 431h1v1h-1zM1279 431h1v1h-1zM1454 431h1v1h-1zM1629 431h1v1h-1zM230 436h1v1h-1zM405 436h1v1h-1zM580 436h1v1h-1zM755 436h1v1h-1zM929 436h1v1h-1zM1104 436h1v1h-1zM1279 436h1v1h-1zM1454 436h1v1h-1zM1629 436h1v1h-1zM230 440h1v1h-1zM405 440h1v1h-1zM580 440h1v1h-1zM755 440h1v1h-1zM929 440h1v1h-1zM1104 440h1v1h-1zM1279 440h1v1h-1zM1454 440h1v1h-1zM1629 440h1v1h-1zM230 445h1v1h-1zM405 445h1v1h-1zM580 445h1v1h-1zM755 445h1v1h-1zM929 445h1v1h-1zM1104 445h1v1h-1zM1279 445h1v1h-1zM1454 445h1v1h-1zM1629 445h1v1h-1zM230 450h1v1h-1zM405 450h1v1h-1zM580 450h1v1h-1zM755 450h1v1h-1zM929 450h1v1h-1zM1104 450h1v1h-1zM1279 450h1v1h-1zM1454 450h1v1h-1zM1629 450h1v1h-1zM230 454h1v1h-1zM405 454h1v1h-1zM580 454h1v1h-1zM755 454h1v1h-1zM929 454h1v1h-1zM1104 454h1v1h-1zM1279 454h1v1h-1zM1454 454h1v1h-1zM1629 454h1v1h-1zM230 459h1v1h-1zM405 459h1v1h-1zM580 459h1v1h-1zM755 459h1v1h-1zM929 459h1v1h-1zM1104 459h1v1h-1zM1279 459h1v1h-1zM1454 459h1v1h-1zM1629 459h1v1h-1zM230 464h1v1h-1zM405 464h1v1h-1zM580 464h1v1h-1zM755 464h1v1h-1zM929 464h1v1h-1zM1104 464h1v1h-1zM1279 464h1v1h-1zM1454 464h1v1h-1zM1629 464h1v1h-1zM230 468h1v1h-1zM405 468h1v1h-1zM580 468h1v1h-1zM755 468h1v1h-1zM929 468h1v1h-1zM1104 468h1v1h-1zM1279 468h1v1h-1zM1454 468h1v1h-1zM1629 468h1v1h-1zM230 473h1v1h-1zM405 473h1v1h-1zM580 473h1v1h-1zM755 473h1v1h-1zM929 473h1v1h-1zM1104 473h1v1h-1zM1279 473h1v1h-1zM1454 473h1v1h-1zM1629 473h1v1h-1zM230 478h1v1h-1zM405 478h1v1h-1zM580 478h1v1h-1zM755 478h1v1h-1zM929 478h1v1h-1zM1104 478h1v1h-1zM1279 478h1v1h-1zM1454 478h1v1h-1zM1629 478h1v1h-1zM230 482h1v1h-1zM405 482h1v1h-1zM580 482h1v1h-1zM755 482h1v1h-1zM929 482h1v1h-1zM1104 482h1v1h-1zM1279 482h1v1h-1zM1454 482h1v1h-1zM1629 482h1v1h-1zM230 487h1v1h-1zM405 487h1v1h-1zM580 487h1v1h-1zM755 487h1v1h-1zM929 487h1v1h-1zM1104 487h1v1h-1zM1279 487h1v1h-1zM1454 487h1v1h-1zM1629 487h1v1h-1zM230 492h1v1h-1zM405 492h1v1h-1zM580 492h1v1h-1zM755 492h1v1h-1zM929 492h1v1h-1zM1104 492h1v1h-1zM1279 492h1v1h-1zM1454 492h1v1h-1zM1629 492h1v1h-1zM230 496h1v1h-1zM405 496h1v1h-1zM580 496h1v1h-1zM755 496h1v1h-1zM929 496h1v1h-1zM1104 496h1v1h-1zM1279 496h1v1h-1zM1454 496h1v1h-1zM1629 496h1v1h-1zM230 501h1v1h-1zM405 501h1v1h-1zM580 501h1v1h-1zM755 501h1v1h-1zM929 501h1v1h-1zM1104 501h1v1h-1zM1279 501h1v1h-1zM1454 501h1v1h-1zM1629 501h1v1h-1zM230 505h1v1h-1zM405 505h1v1h-1zM580 505h1v1h-1zM755 505h1v1h-1zM929 505h1v1h-1zM1104 505h1v1h-1zM1279 505h1v1h-1zM1454 505h1v1h-1zM1629 505h1v1h-1zM230 510h1v1h-1zM405 510h1v1h-1zM580 510h1v1h-1zM755 510h1v1h-1zM929 510h1v1h-1zM1104 510h1v1h-1zM1279 510h1v1h-1zM1454 510h1v1h-1zM1629 510h1v1h-1zM230 515h1v1h-1zM405 515h1v1h-1zM580 515h1v1h-1zM755 515h1v1h-1zM929 515h1v1h-1zM1104 515h1v1h-1zM1279 515h1v1h-1zM1454 515h1v1h-1zM1629 515h1v1h-1zM230 519h1v1h-1zM405 519h1v1h-1zM580 519h1v1h-1zM755 519h1v1h-1zM929 519h1v1h-1zM1104 519h1v1h-1zM1279 519h1v1h-1zM1454 519h1v1h-1zM1629 519h1v1h-1zM20 526h1v1h-1zM55 526h1v1h-1zM90 526h1v1h-1zM125 526h1v1h-1zM160 526h1v1h-1zM195 526h1v1h-1zM230 526h1v1h-1zM265 526h1v1h-1zM300 526h1v1h-1zM335 526h1v1h-1zM370 526h1v1h-1zM405 526h1v1h-1zM440 526h1v1h-1zM475 526h1v1h-1zM510 526h1v1h-1zM545 526h1v1h-1zM580 526h1v1h-1zM615 526h1v1h-1zM650 526h1v1h-1zM685 526h1v1h-1zM720 526h1v1h-1zM755 526h1v1h-1zM790 526h1v1h-1zM825 526h1v1h-1zM860 526h1v1h-1zM894 526h1v1h-1zM929 526h1v1h-1zM964 526h1v1h-1zM999 526h1v1h-1zM1034 526h1v1h-1zM1069 526h1v1h-1zM1104 526h1v1h-1zM1139 526h1v1h-1zM1174 526h1v1h-1zM1209 526h1v1h-1zM1244 526h1v1h-1zM1279 526h1v1h-1zM1314 526h1v1h-1zM1349 526h1v1h-1zM1384 526h1v1h-1zM1419 526h1v1h-1zM1454 526h1v1h-1zM1489 526h1v1h-1zM1524 526h1v1h-1zM1559 526h1v1h-1zM1594 526h1v1h-1zM1629 526h1v1h-1zM1664 526h1v1h-1zM1699 526h1v1h-1zM1734 526h1v1h-1zM20 549h1v1h-1zM55 549h1v1h-1zM90 549h1v1h-1zM125 549h1v1h-1zM160 549h1v1h-1zM195 549h1v1h-1zM230 549h1v1h-1zM265 549h1v1h-1zM300 549h1v1h-1zM335 549h1v1h-1zM370 549h1v1h-1zM405 549h1v1h-1zM440 549h1v1h-1zM475 549h1v1h-1zM510 549h1v1h-1zM545 549h1v1h-1zM580 549h1v1h-1zM615 549h1v1h-1zM650 549h1v1h-1zM685 549h1v1h-1zM720 549h1v1h-1zM755 549h1v1h-1zM790 549h1v1h-1zM825 549h1v1h-1zM860 549h1v1h-1zM894 549h1v1h-1zM929 549h1v1h-1zM964 549h1v1h-1zM999 549h1v1h-1zM1034 549h1v1h-1zM1069 549h1v1h-1zM1104 549h1v1h-1zM1139 549h1v1h-1zM1174 549h1v1h-1zM1209 549h1v1h-1zM1244 549h1v1h-1zM1279 549h1v1h-1zM1314 549h1v1h-1zM1349 549h1v1h-1zM1384 549h1v1h-1zM1419 549h1v1h-1zM1454 549h1v1h-1zM1489 549h1v1h-1zM1524 549h1v1h-1zM1559 549h1v1h-1zM1594 549h1v1h-1zM1629 549h1v1h-1zM1664 549h1v1h-1zM1699 549h1v1h-1zM1734 549h1v1h-1zM20 572h1v1h-1zM55 572h1v1h-1zM90 572h1v1h-1zM125 572h1v1h-1zM160 572h1v1h-1zM195 572h1v1h-1zM230 572h1v1h-1zM265 572h1v1h-1zM300 572h1v1h-1zM335 572h1v1h-1zM370 572h1v1h-1zM405 572h1v1h-1zM440 572h1v1h-1zM475 572h1v1h-1zM510 572h1v1h-1zM545 572h1v1h-1zM580 572h1v1h-1zM615 572h1v1h-1zM650 572h1v1h-1zM685 572h1v1h-1zM720 572h1v1h-1zM755 572h1v1h-1zM790 572h1v1h-1zM825 572h1v1h-1zM860 572h1v1h-1zM894 572h1v1h-1zM929 572h1v1h-1zM964 572h1v1h-1zM999 572h1v1h-1zM1034 572h1v1h-1zM1069 572h1v1h-1zM1104 572h1v1h-1zM1139 572h1v1h-1zM1174 572h1v1h-1zM1209 572h1v1h-1zM1244 572h1v1h-1zM1279 572h1v1h-1zM1314 572h1v1h-1zM1349 572h1v1h-1zM1384 572h1v1h-1zM1419 572h1v1h-1zM1454 572h1v1h-1zM1489 572h1v1h-1zM1524 572h1v1h-1zM1559 572h1v1h-1zM1594 572h1v1h-1zM1629 572h1v1h-1zM1664 572h1v1h-1zM1699 572h1v1h-1zM1734 572h1v1h-1zM20 596h1v1h-1zM55 596h1v1h-1zM90 596h1v1h-1zM125 596h1v1h-1zM160 596h1v1h-1zM195 596h1v1h-1zM230 596h1v1h-1zM265 596h1v1h-1zM300 596h1v1h-1zM335 596h1v1h-1zM370 596h1v1h-1zM405 596h1v1h-1zM440 596h1v1h-1zM475 596h1v1h-1zM510 596h1v1h-1zM545 596h1v1h-1zM580 596h1v1h-1zM615 596h1v1h-1zM650 596h1v1h-1zM685 596h1v1h-1zM720 596h1v1h-1zM755 596h1v1h-1zM790 596h1v1h-1zM825 596h1v1h-1zM860 596h1v1h-1zM894 596h1v1h-1zM929 596h1v1h-1zM964 596h1v1h-1zM999 596h1v1h-1zM1034 596h1v1h-1zM1069 596h1v1h-1zM1104 596h1v1h-1zM1139 596h1v1h-1zM1174 596h1v1h-1zM1209 596h1v1h-1zM1244 596h1v1h-1zM1279 596h1v1h-1zM1314 596h1v1h-1zM1349 596h1v1h-1zM1384 596h1v1h-1zM1419 596h1v1h-1zM1454 596h1v1h-1zM1489 596h1v1h-1zM1524 596h1v1h-1zM1559 596h1v1h-1zM1594 596h1v1h-1zM1629 596h1v1h-1zM1664 596h1v1h-1zM1699 596h1v1h-1zM1734 596h1v1h-1zM20 619h1v1h-1zM55 619h1v1h-1zM90 619h1v1h-1zM125 619h1v1h-1zM160 619h1v1h-1zM195 619h1v1h-1zM230 619h1v1h-1zM265 619h1v1h-1zM300 619h1v1h-1zM335 619h1v1h-1zM370 619h1v1h-1zM405 619h1v1h-1zM440 619h1v1h-1zM475 619h1v1h-1zM510 619h1v1h-1zM545 619h1v1h-1zM580 619h1v1h-1zM615 619h1v1h-1zM650 619h1v1h-1zM685 619h1v1h-1zM720 619h1v1h-1zM755 619h1v1h-1zM790 619h1v1h-1zM825 619h1v1h-1zM860 619h1v1h-1zM894 619h1v1h-1zM929 619h1v1h-1zM964 619h1v1h-1zM999 619h1v1h-1zM1034 619h1v1h-1zM1069 619h1v1h-1zM1104 619h1v1h-1zM1139 619h1v1h-1zM1174 619h1v1h-1zM1209 619h1v1h-1zM1244 619h1v1h-1zM1279 619h1v1h-1zM1314 619h1v1h-1zM1349 619h1v1h-1zM1384 619h1v1h-1zM1419 619h1v1h-1zM1454 619h1v1h-1zM1489 619h1v1h-1zM1524 619h1v1h-1zM1559 619h1v1h-1zM1594 619h1v1h-1zM1629 619h1v1h-1zM1664 619h1v1h-1zM1699 619h1v1h-1zM1734 619h1v1h-1zM20 642h1v1h-1zM55 642h1v1h-1zM90 642h1v1h-1zM125 642h1v1h-1zM160 642h1v1h-1zM195 642h1v1h-1zM230 642h1v1h-1zM265 642h1v1h-1zM300 642h1v1h-1zM335 642h1v1h-1zM370 642h1v1h-1zM405 642h1v1h-1zM440 642h1v1h-1zM475 642h1v1h-1zM510 642h1v1h-1zM545 642h1v1h-1zM580 642h1v1h-1zM615 642h1v1h-1zM650 642h1v1h-1zM685 642h1v1h-1zM720 642h1v1h-1zM755 642h1v1h-1zM790 642h1v1h-1zM825 642h1v1h-1zM860 642h1v1h-1zM894 642h1v1h-1zM929 642h1v1h-1zM964 642h1v1h-1zM999 642h1v1h-1zM1034 642h1v1h-1zM1069 642h1v1h-1zM1104 642h1v1h-1zM1139 642h1v1h-1zM1174 642h1v1h-1zM1209 642h1v1h-1zM1244 642h1v1h-1zM1279 642h1v1h-1zM1314 642h1v1h-1zM1349 642h1v1h-1zM1384 642h1v1h-1zM1419 642h1v1h-1zM1454 642h1v1h-1zM1489 642h1v1h-1zM1524 642h1v1h-1zM1559 642h1v1h-1zM1594 642h1v1h-1zM1629 642h1v1h-1zM1664 642h1v1h-1zM1699 642h1v1h-1zM1734 642h1v1h-1zM20 665h1v1h-1zM55 665h1v1h-1zM90 665h1v1h-1zM125 665h1v1h-1zM160 665h1v1h-1zM195 665h1v1h-1zM230 665h1v1h-1zM265 665h1v1h-1zM300 665h1v1h-1zM335 665h1v1h-1zM370 665h1v1h-1zM405 665h1v1h-1zM440 665h1v1h-1zM475 665h1v1h-1zM510 665h1v1h-1zM545 665h1v1h-1zM580 665h1v1h-1zM615 665h1v1h-1zM650 665h1v1h-1zM685 665h1v1h-1zM720 665h1v1h-1zM755 665h1v1h-1zM790 665h1v1h-1zM825 665h1v1h-1zM860 665h1v1h-1zM894 665h1v1h-1zM929 665h1v1h-1zM964 665h1v1h-1zM999 665h1v1h-1zM1034 665h1v1h-1zM1069 665h1v1h-1zM1104 665h1v1h-1zM1139 665h1v1h-1zM1174 665h1v1h-1zM1209 665h1v1h-1zM1244 665h1v1h-1zM1279 665h1v1h-1zM1314 665h1v1h-1zM1349 665h1v1h-1zM1384 665h1v1h-1zM1419 665h1v1h-1zM1454 665h1v1h-1zM1489 665h1v1h-1zM1524 665h1v1h-1zM1559 665h1v1h-1zM1594 665h1v1h-1zM1629 665h1v1h-1zM1664 665h1v1h-1zM1699 665h1v1h-1zM1734 665h1v1h-1zM20 688h1v1h-1zM55 688h1v1h-1zM90 688h1v1h-1zM125 688h1v1h-1zM160 688h1v1h-1zM195 688h1v1h-1zM230 688h1v1h-1zM265 688h1v1h-1zM300 688h1v1h-1zM335 688h1v1h-1zM370 688h1v1h-1zM405 688h1v1h-1zM440 688h1v1h-1zM475 688h1v1h-1zM510 688h1v1h-1zM545 688h1v1h-1zM580 688h1v1h-1zM615 688h1v1h-1zM650 688h1v1h-1zM685 688h1v1h-1zM720 688h1v1h-1zM755 688h1v1h-1zM790 688h1v1h-1zM825 688h1v1h-1zM860 688h1v1h-1zM894 688h1v1h-1zM929 688h1v1h-1zM964 688h1v1h-1zM999 688h1v1h-1zM1034 688h1v1h-1zM1069 688h1v1h-1zM1104 688h1v1h-1zM1139 688h1v1h-1zM1174 688h1v1h-1zM1209 688h1v1h-1zM1244 688h1v1h-1zM1279 688h1v1h-1zM1314 688h1v1h-1zM1349 688h1v1h-1zM1384 688h1v1h-1zM1419 688h1v1h-1zM1454 688h1v1h-1zM1489 688h1v1h-1zM1524 688h1v1h-1zM1559 688h1v1h-1zM1594 688h1v1h-1zM1629 688h1v1h-1zM1664 688h1v1h-1zM1699 688h1v1h-1zM1734 688h1v1h-1zM20 712h1v1h-1zM55 712h1v1h-1zM90 712h1v1h-1zM125 712h1v1h-1zM160 712h1v1h-1zM195 712h1v1h-1zM230 712h1v1h-1zM265 712h1v1h-1zM300 712h1v1h-1zM335 712h1v1h-1zM370 712h1v1h-1zM405 712h1v1h-1zM440 712h1v1h-1zM475 712h1v1h-1zM510 712h1v1h-1zM545 712h1v1h-1zM580 712h1v1h-1zM615 712h1v1h-1zM650 712h1v1h-1zM685 712h1v1h-1zM720 712h1v1h-1zM755 712h1v1h-1zM790 712h1v1h-1zM825 712h1v1h-1zM860 712h1v1h-1zM894 712h1v1h-1zM929 712h1v1h-1zM964 712h1v1h-1zM999 712h1v1h-1zM1034 712h1v1h-1zM1069 712h1v1h-1zM1104 712h1v1h-1zM1139 712h1v1h-1zM1174 712h1v1h-1zM1209 712h1v1h-1zM1244 712h1v1h-1zM1279 712h1v1h-1zM1314 712h1v1h-1zM1349 712h1v1h-1zM1384 712h1v1h-1zM1419 712h1v1h-1zM1454 712h1v1h-1zM1489 712h1v1h-1zM1524 712h1v1h-1zM1559 712h1v1h-1zM1594 712h1v1h-1zM1629 712h1v1h-1zM1664 712h1v1h-1zM1699 712h1v1h-1zM1734 712h1v1h-1zM20 735h1v1h-1zM55 735h1v1h-1zM90 735h1v1h-1zM125 735h1v1h-1zM160 735h1v1h-1zM195 735h1v1h-1zM230 735h1v1h-1zM265 735h1v1h-1zM300 735h1v1h-1zM335 735h1v1h-1zM370 735h1v1h-1zM405 735h1v1h-1zM440 735h1v1h-1zM475 735h1v1h-1zM510 735h1v1h-1zM545 735h1v1h-1zM580 735h1v1h-1zM615 735h1v1h-1zM650 735h1v1h-1zM685 735h1v1h-1zM720 735h1v1h-1zM755 735h1v1h-1zM790 735h1v1h-1zM825 735h1v1h-1zM860 735h1v1h-1zM894 735h1v1h-1zM929 735h1v1h-1zM964 735h1v1h-1zM999 735h1v1h-1zM1034 735h1v1h-1zM1069 735h1v1h-1zM1104 735h1v1h-1zM1139 735h1v1h-1zM1174 735h1v1h-1zM1209 735h1v1h-1zM1244 735h1v1h-1zM1279 735h1v1h-1zM1314 735h1v1h-1zM1349 735h1v1h-1zM1384 735h1v1h-1zM1419 735h1v1h-1zM1454 735h1v1h-1zM1489 735h1v1h-1zM1524 735h1v1h-1zM1559 735h1v1h-1zM1594 735h1v1h-1zM1629 735h1v1h-1zM1664 735h1v1h-1zM1699 735h1v1h-1zM1734 735h1v1h-1zM230 526h1v1h-1zM405 526h1v1h-1zM580 526h1v1h-1zM755 526h1v1h-1zM929 526h1v1h-1zM1104 526h1v1h-1zM1279 526h1v1h-1zM1454 526h1v1h-1zM1629 526h1v1h-1zM230 531h1v1h-1zM405 531h1v1h-1zM580 531h1v1h-1zM755 531h1v1h-1zM929 531h1v1h-1zM1104 531h1v1h-1zM1279 531h1v1h-1zM1454 531h1v1h-1zM1629 531h1v1h-1zM230 535h1v1h-1zM405 535h1v1h-1zM580 535h1v1h-1zM755 535h1v1h-1zM929 535h1v1h-1zM1104 535h1v1h-1zM1279 535h1v1h-1zM1454 535h1v1h-1zM1629 535h1v1h-1zM230 540h1v1h-1zM405 540h1v1h-1zM580 540h1v1h-1zM755 540h1v1h-1zM929 540h1v1h-1zM1104 540h1v1h-1zM1279 540h1v1h-1zM1454 540h1v1h-1zM1629 540h1v1h-1zM230 545h1v1h-1zM405 545h1v1h-1zM580 545h1v1h-1zM755 545h1v1h-1zM929 545h1v1h-1zM1104 545h1v1h-1zM1279 545h1v1h-1zM1454 545h1v1h-1zM1629 545h1v1h-1zM230 549h1v1h-1zM405 549h1v1h-1zM580 549h1v1h-1zM755 549h1v1h-1zM929 549h1v1h-1zM1104 549h1v1h-1zM1279 549h1v1h-1zM1454 549h1v1h-1zM1629 549h1v1h-1zM230 554h1v1h-1zM405 554h1v1h-1zM580 554h1v1h-1zM755 554h1v1h-1zM929 554h1v1h-1zM1104 554h1v1h-1zM1279 554h1v1h-1zM1454 554h1v1h-1zM1629 554h1v1h-1zM230 558h1v1h-1zM405 558h1v1h-1zM580 558h1v1h-1zM755 558h1v1h-1zM929 558h1v1h-1zM1104 558h1v1h-1zM1279 558h1v1h-1zM1454 558h1v1h-1zM1629 558h1v1h-1zM230 563h1v1h-1zM405 563h1v1h-1zM580 563h1v1h-1zM755 563h1v1h-1zM929 563h1v1h-1zM1104 563h1v1h-1zM1279 563h1v1h-1zM1454 563h1v1h-1zM1629 563h1v1h-1zM230 568h1v1h-1zM405 568h1v1h-1zM580 568h1v1h-1zM755 568h1v1h-1zM929 568h1v1h-1zM1104 568h1v1h-1zM1279 568h1v1h-1zM1454 568h1v1h-1zM1629 568h1v1h-1zM230 572h1v1h-1zM405 572h1v1h-1zM580 572h1v1h-1zM755 572h1v1h-1zM929 572h1v1h-1zM1104 572h1v1h-1zM1279 572h1v1h-1zM1454 572h1v1h-1zM1629 572h1v1h-1zM230 577h1v1h-1zM405 577h1v1h-1zM580 577h1v1h-1zM755 577h1v1h-1zM929 577h1v1h-1zM1104 577h1v1h-1zM1279 577h1v1h-1zM1454 577h1v1h-1zM1629 577h1v1h-1zM230 582h1v1h-1zM405 582h1v1h-1zM580 582h1v1h-1zM755 582h1v1h-1zM929 582h1v1h-1zM1104 582h1v1h-1zM1279 582h1v1h-1zM1454 582h1v1h-1zM1629 582h1v1h-1zM230 586h1v1h-1zM405 586h1v1h-1zM580 586h1v1h-1zM755 586h1v1h-1zM929 586h1v1h-1zM1104 586h1v1h-1zM1279 586h1v1h-1zM1454 586h1v1h-1zM1629 586h1v1h-1zM230 591h1v1h-1zM405 591h1v1h-1zM580 591h1v1h-1zM755 591h1v1h-1zM929 591h1v1h-1zM1104 591h1v1h-1zM1279 591h1v1h-1zM1454 591h1v1h-1zM1629 591h1v1h-1zM230 596h1v1h-1zM405 596h1v1h-1zM580 596h1v1h-1zM755 596h1v1h-1zM929 596h1v1h-1zM1104 596h1v1h-1zM1279 596h1v1h-1zM1454 596h1v1h-1zM1629 596h1v1h-1zM230 600h1v1h-1zM405 600h1v1h-1zM580 600h1v1h-1zM755 600h1v1h-1zM929 600h1v1h-1zM1104 600h1v1h-1zM1279 600h1v1h-1zM1454 600h1v1h-1zM1629 600h1v1h-1zM230 605h1v1h-1zM405 605h1v1h-1zM580 605h1v1h-1zM755 605h1v1h-1zM929 605h1v1h-1zM1104 605h1v1h-1zM1279 605h1v1h-1zM1454 605h1v1h-1zM1629 605h1v1h-1zM230 610h1v1h-1zM405 610h1v1h-1zM580 610h1v1h-1zM755 610h1v1h-1zM929 610h1v1h-1zM1104 610h1v1h-1zM1279 610h1v1h-1zM1454 610h1v1h-1zM1629 610h1v1h-1zM230 614h1v1h-1zM405 614h1v1h-1zM580 614h1v1h-1zM755 614h1v1h-1zM929 614h1v1h-1zM1104 614h1v1h-1zM1279 614h1v1h-1zM1454 614h1v1h-1zM1629 614h1v1h-1zM230 619h1v1h-1zM405 619h1v1h-1zM580 619h1v1h-1zM755 619h1v1h-1zM929 619h1v1h-1zM1104 619h1v1h-1zM1279 619h1v1h-1zM1454 619h1v1h-1zM1629 619h1v1h-1zM230 623h1v1h-1zM405 623h1v1h-1zM580 623h1v1h-1zM755 623h1v1h-1zM929 623h1v1h-1zM1104 623h1v1h-1zM1279 623h1v1h-1zM1454 623h1v1h-1zM1629 623h1v1h-1zM230 628h1v1h-1zM405 628h1v1h-1zM580 628h1v1h-1zM755 628h1v1h-1zM929 628h1v1h-1zM1104 628h1v1h-1zM1279 628h1v1h-1zM1454 628h1v1h-1zM1629 628h1v1h-1zM230 633h1v1h-1zM405 633h1v1h-1zM580 633h1v1h-1zM755 633h1v1h-1zM929 633h1v1h-1zM1104 633h1v1h-1zM1279 633h1v1h-1zM1454 633h1v1h-1zM1629 633h1v1h-1zM230 637h1v1h-1zM405 637h1v1h-1zM580 637h1v1h-1zM755 637h1v1h-1zM929 637h1v1h-1zM1104 637h1v1h-1zM1279 637h1v1h-1zM1454 637h1v1h-1zM1629 637h1v1h-1zM230 642h1v1h-1zM405 642h1v1h-1zM580 642h1v1h-1zM755 642h1v1h-1zM929 642h1v1h-1zM1104 642h1v1h-1zM1279 642h1v1h-1zM1454 642h1v1h-1zM1629 642h1v1h-1zM230 647h1v1h-1zM405 647h1v1h-1zM580 647h1v1h-1zM755 647h1v1h-1zM929 647h1v1h-1zM1104 647h1v1h-1zM1279 647h1v1h-1zM1454 647h1v1h-1zM1629 647h1v1h-1zM230 651h1v1h-1zM405 651h1v1h-1zM580 651h1v1h-1zM755 651h1v1h-1zM929 651h1v1h-1zM1104 651h1v1h-1zM1279 651h1v1h-1zM1454 651h1v1h-1zM1629 651h1v1h-1zM230 656h1v1h-1zM405 656h1v1h-1zM580 656h1v1h-1zM755 656h1v1h-1zM929 656h1v1h-1zM1104 656h1v1h-1zM1279 656h1v1h-1zM1454 656h1v1h-1zM1629 656h1v1h-1zM230 661h1v1h-1zM405 661h1v1h-1zM580 661h1v1h-1zM755 661h1v1h-1zM929 661h1v1h-1zM1104 661h1v1h-1zM1279 661h1v1h-1zM1454 661h1v1h-1zM1629 661h1v1h-1zM230 665h1v1h-1zM405 665h1v1h-1zM580 665h1v1h-1zM755 665h1v1h-1zM929 665h1v1h-1zM1104 665h1v1h-1zM1279 665h1v1h-1zM1454 665h1v1h-1zM1629 665h1v1h-1zM230 670h1v1h-1zM405 670h1v1h-1zM580 670h1v1h-1zM755 670h1v1h-1zM929 670h1v1h-1zM1104 670h1v1h-1zM1279 670h1v1h-1zM1454 670h1v1h-1zM1629 670h1v1h-1zM230 674h1v1h-1zM405 674h1v1h-1zM580 674h1v1h-1zM755 674h1v1h-1zM929 674h1v1h-1zM1104 674h1v1h-1zM1279 674h1v1h-1zM1454 674h1v1h-1zM1629 674h1v1h-1zM230 679h1v1h-1zM405 679h1v1h-1zM580 679h1v1h-1zM755 679h1v1h-1zM929 679h1v1h-1zM1104 679h1v1h-1zM1279 679h1v1h-1zM1454 679h1v1h-1zM1629 679h1v1h-1zM230 684h1v1h-1zM405 684h1v1h-1zM580 684h1v1h-1zM755 684h1v1h-1zM929 684h1v1h-1zM1104 684h1v1h-1zM1279 684h1v1h-1zM1454 684h1v1h-1zM1629 684h1v1h-1zM230 688h1v1h-1zM405 688h1v1h-1zM580 688h1v1h-1zM755 688h1v1h-1zM929 688h1v1h-1zM1104 688h1v1h-1zM1279 688h1v1h-1zM1454 688h1v1h-1zM1629 688h1v1h-1zM230 693h1v1h-1zM405 693h1v1h-1zM580 693h1v1h-1zM755 693h1v1h-1zM929 693h1v1h-1zM1104 693h1v1h-1zM1279 693h1v1h-1zM1454 693h1v1h-1zM1629 693h1v1h-1zM230 698h1v1h-1zM405 698h1v1h-1zM580 698h1v1h-1zM755 698h1v1h-1zM929 698h1v1h-1zM1104 698h1v1h-1zM1279 698h1v1h-1zM1454 698h1v1h-1zM1629 698h1v1h-1zM230 702h1v1h-1zM405 702h1v1h-1zM580 702h1v1h-1zM755 702h1v1h-1zM929 702h1v1h-1zM1104 702h1v1h-1zM1279 702h1v1h-1zM1454 702h1v1h-1zM1629 702h1v1h-1zM230 707h1v1h-1zM405 707h1v1h-1zM580 707h1v1h-1zM755 707h1v1h-1zM929 707h1v1h-1zM1104 707h1v1h-1zM1279 707h1v1h-1zM1454 707h1v1h-1zM1629 707h1v1h-1zM230 712h1v1h-1zM405 712h1v1h-1zM580 712h1v1h-1zM755 712h1v1h-1zM929 712h1v1h-1zM1104 712h1v1h-1zM1279 712h1v1h-1zM1454 712h1v1h-1zM1629 712h1v1h-1zM230 716h1v1h-1zM405 716h1v1h-1zM580 716h1v1h-1zM755 716h1v1h-1zM929 716h1v1h-1zM1104 716h1v1h-1zM1279 716h1v1h-1zM1454 716h1v1h-1zM1629 716h1v1h-1zM230 721h1v1h-1zM405 721h1v1h-1zM580 721h1v1h-1zM755 721h1v1h-1zM929 721h1v1h-1zM1104 721h1v1h-1zM1279 721h1v1h-1zM1454 721h1v1h-1zM1629 721h1v1h-1zM230 726h1v1h-1zM405 726h1v1h-1zM580 726h1v1h-1zM755 726h1v1h-1zM929 726h1v1h-1zM1104 726h1v1h-1zM1279 726h1v1h-1zM1454 726h1v1h-1zM1629 726h1v1h-1zM230 730h1v1h-1zM405 730h1v1h-1zM580 730h1v1h-1zM755 730h1v1h-1zM929 730h1v1h-1zM1104 730h1v1h-1zM1279 730h1v1h-1zM1454 730h1v1h-1zM1629 730h1v1h-1zM230 735h1v1h-1zM405 735h1v1h-1zM580 735h1v1h-1zM755 735h1v1h-1zM929 735h1v1h-1zM1104 735h1v1h-1zM1279 735h1v1h-1zM1454 735h1v1h-1zM1629 735h1v1h-1zM230 739h1v1h-1zM405 739h1v1h-1zM580 739h1v1h-1zM755 739h1v1h-1zM929 739h1v1h-1zM1104 739h1v1h-1zM1279 739h1v1h-1zM1454 739h1v1h-1zM1629 739h1v1h-1zM230 744h1v1h-1zM405 744h1v1h-1zM580 744h1v1h-1zM755 744h1v1h-1zM929 744h1v1h-1zM1104 744h1v1h-1zM1279 744h1v1h-1zM1454 744h1v1h-1zM1629 744h1v1h-1zM230 749h1v1h-1zM405 749h1v1h-1zM580 749h1v1h-1zM755 749h1v1h-1zM929 749h1v1h-1zM1104 749h1v1h-1zM1279 749h1v1h-1zM1454 749h1v1h-1zM1629 749h1v1h-1zM230 753h1v1h-1zM405 753h1v1h-1zM580 753h1v1h-1zM755 753h1v1h-1zM929 753h1v1h-1zM1104 753h1v1h-1zM1279 753h1v1h-1zM1454 753h1v1h-1zM1629 753h1v1h-1zM20 772h1v1h-1zM55 772h1v1h-1zM90 772h1v1h-1zM125 772h1v1h-1zM160 772h1v1h-1zM195 772h1v1h-1zM230 772h1v1h-1zM265 772h1v1h-1zM300 772h1v1h-1zM335 772h1v1h-1zM370 772h1v1h-1zM405 772h1v1h-1zM440 772h1v1h-1zM475 772h1v1h-1zM510 772h1v1h-1zM545 772h1v1h-1zM580 772h1v1h-1zM615 772h1v1h-1zM650 772h1v1h-1zM685 772h1v1h-1zM720 772h1v1h-1zM755 772h1v1h-1zM790 772h1v1h-1zM825 772h1v1h-1zM860 772h1v1h-1zM894 772h1v1h-1zM929 772h1v1h-1zM964 772h1v1h-1zM999 772h1v1h-1zM1034 772h1v1h-1zM1069 772h1v1h-1zM1104 772h1v1h-1zM1139 772h1v1h-1zM1174 772h1v1h-1zM1209 772h1v1h-1zM1244 772h1v1h-1zM1279 772h1v1h-1zM1314 772h1v1h-1zM1349 772h1v1h-1zM1384 772h1v1h-1zM1419 772h1v1h-1zM1454 772h1v1h-1zM1489 772h1v1h-1zM1524 772h1v1h-1zM1559 772h1v1h-1zM1594 772h1v1h-1zM1629 772h1v1h-1zM1664 772h1v1h-1zM1699 772h1v1h-1zM1734 772h1v1h-1zM20 795h1v1h-1zM55 795h1v1h-1zM90 795h1v1h-1zM125 795h1v1h-1zM160 795h1v1h-1zM195 795h1v1h-1zM230 795h1v1h-1zM265 795h1v1h-1zM300 795h1v1h-1zM335 795h1v1h-1zM370 795h1v1h-1zM405 795h1v1h-1zM440 795h1v1h-1zM475 795h1v1h-1zM510 795h1v1h-1zM545 795h1v1h-1zM580 795h1v1h-1zM615 795h1v1h-1zM650 795h1v1h-1zM685 795h1v1h-1zM720 795h1v1h-1zM755 795h1v1h-1zM790 795h1v1h-1zM825 795h1v1h-1zM860 795h1v1h-1zM894 795h1v1h-1zM929 795h1v1h-1zM964 795h1v1h-1zM999 795h1v1h-1zM1034 795h1v1h-1zM1069 795h1v1h-1zM1104 795h1v1h-1zM1139 795h1v1h-1zM1174 795h1v1h-1zM1209 795h1v1h-1zM1244 795h1v1h-1zM1279 795h1v1h-1zM1314 795h1v1h-1zM1349 795h1v1h-1zM1384 795h1v1h-1zM1419 795h1v1h-1zM1454 795h1v1h-1zM1489 795h1v1h-1zM1524 795h1v1h-1zM1559 795h1v1h-1zM1594 795h1v1h-1zM1629 795h1v1h-1zM1664 795h1v1h-1zM1699 795h1v1h-1zM1734 795h1v1h-1zM20 819h1v1h-1zM55 819h1v1h-1zM90 819h1v1h-1zM125 819h1v1h-1zM160 819h1v1h-1zM195 819h1v1h-1zM230 819h1v1h-1zM265 819h1v1h-1zM300 819h1v1h-1zM335 819h1v1h-1zM370 819h1v1h-1zM405 819h1v1h-1zM440 819h1v1h-1zM475 819h1v1h-1zM510 819h1v1h-1zM545 819h1v1h-1zM580 819h1v1h-1zM615 819h1v1h-1zM650 819h1v1h-1zM685 819h1v1h-1zM720 819h1v1h-1zM755 819h1v1h-1zM790 819h1v1h-1zM825 819h1v1h-1zM860 819h1v1h-1zM894 819h1v1h-1zM929 819h1v1h-1zM964 819h1v1h-1zM999 819h1v1h-1zM1034 819h1v1h-1zM1069 819h1v1h-1zM1104 819h1v1h-1zM1139 819h1v1h-1zM1174 819h1v1h-1zM1209 819h1v1h-1zM1244 819h1v1h-1zM1279 819h1v1h-1zM1314 819h1v1h-1zM1349 819h1v1h-1zM1384 819h1v1h-1zM1419 819h1v1h-1zM1454 819h1v1h-1zM1489 819h1v1h-1zM1524 819h1v1h-1zM1559 819h1v1h-1zM1594 819h1v1h-1zM1629 819h1v1h-1zM1664 819h1v1h-1zM1699 819h1v1h-1zM1734 819h1v1h-1zM20 842h1v1h-1zM55 842h1v1h-1zM90 842h1v1h-1zM125 842h1v1h-1zM160 842h1v1h-1zM195 842h1v1h-1zM230 842h1v1h-1zM265 842h1v1h-1zM300 842h1v1h-1zM335 842h1v1h-1zM370 842h1v1h-1zM405 842h1v1h-1zM440 842h1v1h-1zM475 842h1v1h-1zM510 842h1v1h-1zM545 842h1v1h-1zM580 842h1v1h-1zM615 842h1v1h-1zM650 842h1v1h-1zM685 842h1v1h-1zM720 842h1v1h-1zM755 842h1v1h-1zM790 842h1v1h-1zM825 842h1v1h-1zM860 842h1v1h-1zM894 842h1v1h-1zM929 842h1v1h-1zM964 842h1v1h-1zM999 842h1v1h-1zM1034 842h1v1h-1zM1069 842h1v1h-1zM1104 842h1v1h-1zM1139 842h1v1h-1zM1174 842h1v1h-1zM1209 842h1v1h-1zM1244 842h1v1h-1zM1279 842h1v1h-1zM1314 842h1v1h-1zM1349 842h1v1h-1zM1384 842h1v1h-1zM1419 842h1v1h-1zM1454 842h1v1h-1zM1489 842h1v1h-1zM1524 842h1v1h-1zM1559 842h1v1h-1zM1594 842h1v1h-1zM1629 842h1v1h-1zM1664 842h1v1h-1zM1699 842h1v1h-1zM1734 842h1v1h-1zM20 865h1v1h-1zM55 865h1v1h-1zM90 865h1v1h-1zM125 865h1v1h-1zM160 865h1v1h-1zM195 865h1v1h-1zM230 865h1v1h-1zM265 865h1v1h-1zM300 865h1v1h-1zM335 865h1v1h-1zM370 865h1v1h-1zM405 865h1v1h-1zM440 865h1v1h-1zM475 865h1v1h-1zM510 865h1v1h-1zM545 865h1v1h-1zM580 865h1v1h-1zM615 865h1v1h-1zM650 865h1v1h-1zM685 865h1v1h-1zM720 865h1v1h-1zM755 865h1v1h-1zM790 865h1v1h-1zM825 865h1v1h-1zM860 865h1v1h-1zM894 865h1v1h-1zM929 865h1v1h-1zM964 865h1v1h-1zM999 865h1v1h-1zM1034 865h1v1h-1zM1069 865h1v1h-1zM1104 865h1v1h-1zM1139 865h1v1h-1zM1174 865h1v1h-1zM1209 865h1v1h-1zM1244 865h1v1h-1zM1279 865h1v1h-1zM1314 865h1v1h-1zM1349 865h1v1h-1zM1384 865h1v1h-1zM1419 865h1v1h-1zM1454 865h1v1h-1zM1489 865h1v1h-1zM1524 865h1v1h-1zM1559 865h1v1h-1zM1594 865h1v1h-1zM1629 865h1v1h-1zM1664 865h1v1h-1zM1699 865h1v1h-1zM1734 865h1v1h-1zM20 888h1v1h-1zM55 888h1v1h-1zM90 888h1v1h-1zM125 888h1v1h-1zM160 888h1v1h-1zM195 888h1v1h-1zM230 888h1v1h-1zM265 888h1v1h-1zM300 888h1v1h-1zM335 888h1v1h-1zM370 888h1v1h-1zM405 888h1v1h-1zM440 888h1v1h-1zM475 888h1v1h-1zM510 888h1v1h-1zM545 888h1v1h-1zM580 888h1v1h-1zM615 888h1v1h-1zM650 888h1v1h-1zM685 888h1v1h-1zM720 888h1v1h-1zM755 888h1v1h-1zM790 888h1v1h-1zM825 888h1v1h-1zM860 888h1v1h-1zM894 888h1v1h-1zM929 888h1v1h-1zM964 888h1v1h-1zM999 888h1v1h-1zM1034 888h1v1h-1zM1069 888h1v1h-1zM1104 888h1v1h-1zM1139 888h1v1h-1zM1174 888h1v1h-1zM1209 888h1v1h-1zM1244 888h1v1h-1zM1279 888h1v1h-1zM1314 888h1v1h-1zM1349 888h1v1h-1zM1384 888h1v1h-1zM1419 888h1v1h-1zM1454 888h1v1h-1zM1489 888h1v1h-1zM1524 888h1v1h-1zM1559 888h1v1h-1zM1594 888h1v1h-1zM1629 888h1v1h-1zM1664 888h1v1h-1zM1699 888h1v1h-1zM1734 888h1v1h-1zM20 911h1v1h-1zM55 911h1v1h-1zM90 911h1v1h-1zM125 911h1v1h-1zM160 911h1v1h-1zM195 911h1v1h-1zM230 911h1v1h-1zM265 911h1v1h-1zM300 911h1v1h-1zM335 911h1v1h-1zM370 911h1v1h-1zM405 911h1v1h-1zM440 911h1v1h-1zM475 911h1v1h-1zM510 911h1v1h-1zM545 911h1v1h-1zM580 911h1v1h-1zM615 911h1v1h-1zM650 911h1v1h-1zM685 911h1v1h-1zM720 911h1v1h-1zM755 911h1v1h-1zM790 911h1v1h-1zM825 911h1v1h-1zM860 911h1v1h-1zM894 911h1v1h-1zM929 911h1v1h-1zM964 911h1v1h-1zM999 911h1v1h-1zM1034 911h1v1h-1zM1069 911h1v1h-1zM1104 911h1v1h-1zM1139 911h1v1h-1zM1174 911h1v1h-1zM1209 911h1v1h-1zM1244 911h1v1h-1zM1279 911h1v1h-1zM1314 911h1v1h-1zM1349 911h1v1h-1zM1384 911h1v1h-1zM1419 911h1v1h-1zM1454 911h1v1h-1zM1489 911h1v1h-1zM1524 911h1v1h-1zM1559 911h1v1h-1zM1594 911h1v1h-1zM1629 911h1v1h-1zM1664 911h1v1h-1zM1699 911h1v1h-1zM1734 911h1v1h-1zM20 935h1v1h-1zM55 935h1v1h-1zM90 935h1v1h-1zM125 935h1v1h-1zM160 935h1v1h-1zM195 935h1v1h-1zM230 935h1v1h-1zM265 935h1v1h-1zM300 935h1v1h-1zM335 935h1v1h-1zM370 935h1v1h-1zM405 935h1v1h-1zM440 935h1v1h-1zM475 935h1v1h-1zM510 935h1v1h-1zM545 935h1v1h-1zM580 935h1v1h-1zM615 935h1v1h-1zM650 935h1v1h-1zM685 935h1v1h-1zM720 935h1v1h-1zM755 935h1v1h-1zM790 935h1v1h-1zM825 935h1v1h-1zM860 935h1v1h-1zM894 935h1v1h-1zM929 935h1v1h-1zM964 935h1v1h-1zM999 935h1v1h-1zM1034 935h1v1h-1zM1069 935h1v1h-1zM1104 935h1v1h-1zM1139 935h1v1h-1zM1174 935h1v1h-1zM1209 935h1v1h-1zM1244 935h1v1h-1zM1279 935h1v1h-1zM1314 935h1v1h-1zM1349 935h1v1h-1zM1384 935h1v1h-1zM1419 935h1v1h-1zM1454 935h1v1h-1zM1489 935h1v1h-1zM1524 935h1v1h-1zM1559 935h1v1h-1zM1594 935h1v1h-1zM1629 935h1v1h-1zM1664 935h1v1h-1zM1699 935h1v1h-1zM1734 935h1v1h-1zM20 958h1v1h-1zM55 958h1v1h-1zM90 958h1v1h-1zM125 958h1v1h-1zM160 958h1v1h-1zM195 958h1v1h-1zM230 958h1v1h-1zM265 958h1v1h-1zM300 958h1v1h-1zM335 958h1v1h-1zM370 958h1v1h-1zM405 958h1v1h-1zM440 958h1v1h-1zM475 958h1v1h-1zM510 958h1v1h-1zM545 958h1v1h-1zM580 958h1v1h-1zM615 958h1v1h-1zM650 958h1v1h-1zM685 958h1v1h-1zM720 958h1v1h-1zM755 958h1v1h-1zM790 958h1v1h-1zM825 958h1v1h-1zM860 958h1v1h-1zM894 958h1v1h-1zM929 958h1v1h-1zM964 958h1v1h-1zM999 958h1v1h-1zM1034 958h1v1h-1zM1069 958h1v1h-1zM1104 958h1v1h-1zM1139 958h1v1h-1zM1174 958h1v1h-1zM1209 958h1v1h-1zM1244 958h1v1h-1zM1279 958h1v1h-1zM1314 958h1v1h-1zM1349 958h1v1h-1zM1384 958h1v1h-1zM1419 958h1v1h-1zM1454 958h1v1h-1zM1489 958h1v1h-1zM1524 958h1v1h-1zM1559 958h1v1h-1zM1594 958h1v1h-1zM1629 958h1v1h-1zM1664 958h1v1h-1zM1699 958h1v1h-1zM1734 958h1v1h-1zM20 981h1v1h-1zM55 981h1v1h-1zM90 981h1v1h-1zM125 981h1v1h-1zM160 981h1v1h-1zM195 981h1v1h-1zM230 981h1v1h-1zM265 981h1v1h-1zM300 981h1v1h-1zM335 981h1v1h-1zM370 981h1v1h-1zM405 981h1v1h-1zM440 981h1v1h-1zM475 981h1v1h-1zM510 981h1v1h-1zM545 981h1v1h-1zM580 981h1v1h-1zM615 981h1v1h-1zM650 981h1v1h-1zM685 981h1v1h-1zM720 981h1v1h-1zM755 981h1v1h-1zM790 981h1v1h-1zM825 981h1v1h-1zM860 981h1v1h-1zM894 981h1v1h-1zM929 981h1v1h-1zM964 981h1v1h-1zM999 981h1v1h-1zM1034 981h1v1h-1zM1069 981h1v1h-1zM1104 981h1v1h-1zM1139 981h1v1h-1zM1174 981h1v1h-1zM1209 981h1v1h-1zM1244 981h1v1h-1zM1279 981h1v1h-1zM1314 981h1v1h-1zM1349 981h1v1h-1zM1384 981h1v1h-1zM1419 981h1v1h-1zM1454 981h1v1h-1zM1489 981h1v1h-1zM1524 981h1v1h-1zM1559 981h1v1h-1zM1594 981h1v1h-1zM1629 981h1v1h-1zM1664 981h1v1h-1zM1699 981h1v1h-1zM1734 981h1v1h-1zM230 763h1v1h-1zM405 763h1v1h-1zM580 763h1v1h-1zM755 763h1v1h-1zM929 763h1v1h-1zM1104 763h1v1h-1zM1279 763h1v1h-1zM1454 763h1v1h-1zM1629 763h1v1h-1zM230 768h1v1h-1zM405 768h1v1h-1zM580 768h1v1h-1zM755 768h1v1h-1zM929 768h1v1h-1zM1104 768h1v1h-1zM1279 768h1v1h-1zM1454 768h1v1h-1zM1629 768h1v1h-1zM230 772h1v1h-1zM405 772h1v1h-1zM580 772h1v1h-1zM755 772h1v1h-1zM929 772h1v1h-1zM1104 772h1v1h-1zM1279 772h1v1h-1zM1454 772h1v1h-1zM1629 772h1v1h-1zM230 777h1v1h-1zM405 777h1v1h-1zM580 777h1v1h-1zM755 777h1v1h-1zM929 777h1v1h-1zM1104 777h1v1h-1zM1279 777h1v1h-1zM1454 777h1v1h-1zM1629 777h1v1h-1zM230 782h1v1h-1zM405 782h1v1h-1zM580 782h1v1h-1zM755 782h1v1h-1zM929 782h1v1h-1zM1104 782h1v1h-1zM1279 782h1v1h-1zM1454 782h1v1h-1zM1629 782h1v1h-1zM230 786h1v1h-1zM405 786h1v1h-1zM580 786h1v1h-1zM755 786h1v1h-1zM929 786h1v1h-1zM1104 786h1v1h-1zM1279 786h1v1h-1zM1454 786h1v1h-1zM1629 786h1v1h-1zM230 791h1v1h-1zM405 791h1v1h-1zM580 791h1v1h-1zM755 791h1v1h-1zM929 791h1v1h-1zM1104 791h1v1h-1zM1279 791h1v1h-1zM1454 791h1v1h-1zM1629 791h1v1h-1zM230 795h1v1h-1zM405 795h1v1h-1zM580 795h1v1h-1zM755 795h1v1h-1zM929 795h1v1h-1zM1104 795h1v1h-1zM1279 795h1v1h-1zM1454 795h1v1h-1zM1629 795h1v1h-1zM230 800h1v1h-1zM405 800h1v1h-1zM580 800h1v1h-1zM755 800h1v1h-1zM929 800h1v1h-1zM1104 800h1v1h-1zM1279 800h1v1h-1zM1454 800h1v1h-1zM1629 800h1v1h-1zM230 805h1v1h-1zM405 805h1v1h-1zM580 805h1v1h-1zM755 805h1v1h-1zM929 805h1v1h-1zM1104 805h1v1h-1zM1279 805h1v1h-1zM1454 805h1v1h-1zM1629 805h1v1h-1zM230 809h1v1h-1zM405 809h1v1h-1zM580 809h1v1h-1zM755 809h1v1h-1zM929 809h1v1h-1zM1104 809h1v1h-1zM1279 809h1v1h-1zM1454 809h1v1h-1zM1629 809h1v1h-1zM230 814h1v1h-1zM405 814h1v1h-1zM580 814h1v1h-1zM755 814h1v1h-1zM929 814h1v1h-1zM1104 814h1v1h-1zM1279 814h1v1h-1zM1454 814h1v1h-1zM1629 814h1v1h-1zM230 819h1v1h-1zM405 819h1v1h-1zM580 819h1v1h-1zM755 819h1v1h-1zM929 819h1v1h-1zM1104 819h1v1h-1zM1279 819h1v1h-1zM1454 819h1v1h-1zM1629 819h1v1h-1zM230 823h1v1h-1zM405 823h1v1h-1zM580 823h1v1h-1zM755 823h1v1h-1zM929 823h1v1h-1zM1104 823h1v1h-1zM1279 823h1v1h-1zM1454 823h1v1h-1zM1629 823h1v1h-1zM230 828h1v1h-1zM405 828h1v1h-1zM580 828h1v1h-1zM755 828h1v1h-1zM929 828h1v1h-1zM1104 828h1v1h-1zM1279 828h1v1h-1zM1454 828h1v1h-1zM1629 828h1v1h-1zM230 833h1v1h-1zM405 833h1v1h-1zM580 833h1v1h-1zM755 833h1v1h-1zM929 833h1v1h-1zM1104 833h1v1h-1zM1279 833h1v1h-1zM1454 833h1v1h-1zM1629 833h1v1h-1zM230 837h1v1h-1zM405 837h1v1h-1zM580 837h1v1h-1zM755 837h1v1h-1zM929 837h1v1h-1zM1104 837h1v1h-1zM1279 837h1v1h-1zM1454 837h1v1h-1zM1629 837h1v1h-1zM230 842h1v1h-1zM405 842h1v1h-1zM580 842h1v1h-1zM755 842h1v1h-1zM929 842h1v1h-1zM1104 842h1v1h-1zM1279 842h1v1h-1zM1454 842h1v1h-1zM1629 842h1v1h-1zM230 846h1v1h-1zM405 846h1v1h-1zM580 846h1v1h-1zM755 846h1v1h-1zM929 846h1v1h-1zM1104 846h1v1h-1zM1279 846h1v1h-1zM1454 846h1v1h-1zM1629 846h1v1h-1zM230 851h1v1h-1zM405 851h1v1h-1zM580 851h1v1h-1zM755 851h1v1h-1zM929 851h1v1h-1zM1104 851h1v1h-1zM1279 851h1v1h-1zM1454 851h1v1h-1zM1629 851h1v1h-1zM230 856h1v1h-1zM405 856h1v1h-1zM580 856h1v1h-1zM755 856h1v1h-1zM929 856h1v1h-1zM1104 856h1v1h-1zM1279 856h1v1h-1zM1454 856h1v1h-1zM1629 856h1v1h-1zM230 860h1v1h-1zM405 860h1v1h-1zM580 860h1v1h-1zM755 860h1v1h-1zM929 860h1v1h-1zM1104 860h1v1h-1zM1279 860h1v1h-1zM1454 860h1v1h-1zM1629 860h1v1h-1zM230 865h1v1h-1zM405 865h1v1h-1zM580 865h1v1h-1zM755 865h1v1h-1zM929 865h1v1h-1zM1104 865h1v1h-1zM1279 865h1v1h-1zM1454 865h1v1h-1zM1629 865h1v1h-1zM230 870h1v1h-1zM405 870h1v1h-1zM580 870h1v1h-1zM755 870h1v1h-1zM929 870h1v1h-1zM1104 870h1v1h-1zM1279 870h1v1h-1zM1454 870h1v1h-1zM1629 870h1v1h-1zM230 874h1v1h-1zM405 874h1v1h-1zM580 874h1v1h-1zM755 874h1v1h-1zM929 874h1v1h-1zM1104 874h1v1h-1zM1279 874h1v1h-1zM1454 874h1v1h-1zM1629 874h1v1h-1zM230 879h1v1h-1zM405 879h1v1h-1zM580 879h1v1h-1zM755 879h1v1h-1zM929 879h1v1h-1zM1104 879h1v1h-1zM1279 879h1v1h-1zM1454 879h1v1h-1zM1629 879h1v1h-1zM230 884h1v1h-1zM405 884h1v1h-1zM580 884h1v1h-1zM755 884h1v1h-1zM929 884h1v1h-1zM1104 884h1v1h-1zM1279 884h1v1h-1zM1454 884h1v1h-1zM1629 884h1v1h-1zM230 888h1v1h-1zM405 888h1v1h-1zM580 888h1v1h-1zM755 888h1v1h-1zM929 888h1v1h-1zM1104 888h1v1h-1zM1279 888h1v1h-1zM1454 888h1v1h-1zM1629 888h1v1h-1zM230 893h1v1h-1zM405 893h1v1h-1zM580 893h1v1h-1zM755 893h1v1h-1zM929 893h1v1h-1zM1104 893h1v1h-1zM1279 893h1v1h-1zM1454 893h1v1h-1zM1629 893h1v1h-1zM230 898h1v1h-1zM405 898h1v1h-1zM580 898h1v1h-1zM755 898h1v1h-1zM929 898h1v1h-1zM1104 898h1v1h-1zM1279 898h1v1h-1zM1454 898h1v1h-1zM1629 898h1v1h-1zM230 902h1v1h-1zM405 902h1v1h-1zM580 902h1v1h-1zM755 902h1v1h-1zM929 902h1v1h-1zM1104 902h1v1h-1zM1279 902h1v1h-1zM1454 902h1v1h-1zM1629 902h1v1h-1zM230 907h1v1h-1zM405 907h1v1h-1zM580 907h1v1h-1zM755 907h1v1h-1zM929 907h1v1h-1zM1104 907h1v1h-1zM1279 907h1v1h-1zM1454 907h1v1h-1zM1629 907h1v1h-1zM230 911h1v1h-1zM405 911h1v1h-1zM580 911h1v1h-1zM755 911h1v1h-1zM929 911h1v1h-1zM1104 911h1v1h-1zM1279 911h1v1h-1zM1454 911h1v1h-1zM1629 911h1v1h-1zM230 916h1v1h-1zM405 916h1v1h-1zM580 916h1v1h-1zM755 916h1v1h-1zM929 916h1v1h-1zM1104 916h1v1h-1zM1279 916h1v1h-1zM1454 916h1v1h-1zM1629 916h1v1h-1zM230 921h1v1h-1zM405 921h1v1h-1zM580 921h1v1h-1zM755 921h1v1h-1zM929 921h1v1h-1zM1104 921h1v1h-1zM1279 921h1v1h-1zM1454 921h1v1h-1zM1629 921h1v1h-1zM230 925h1v1h-1zM405 925h1v1h-1zM580 925h1v1h-1zM755 925h1v1h-1zM929 925h1v1h-1zM1104 925h1v1h-1zM1279 925h1v1h-1zM1454 925h1v1h-1zM1629 925h1v1h-1zM230 930h1v1h-1zM405 930h1v1h-1zM580 930h1v1h-1zM755 930h1v1h-1zM929 930h1v1h-1zM1104 930h1v1h-1zM1279 930h1v1h-1zM1454 930h1v1h-1zM1629 930h1v1h-1zM230 935h1v1h-1zM405 935h1v1h-1zM580 935h1v1h-1zM755 935h1v1h-1zM929 935h1v1h-1zM1104 935h1v1h-1zM1279 935h1v1h-1zM1454 935h1v1h-1zM1629 935h1v1h-1zM230 939h1v1h-1zM405 939h1v1h-1zM580 939h1v1h-1zM755 939h1v1h-1zM929 939h1v1h-1zM1104 939h1v1h-1zM1279 939h1v1h-1zM1454 939h1v1h-1zM1629 939h1v1h-1zM230 944h1v1h-1zM405 944h1v1h-1zM580 944h1v1h-1zM755 944h1v1h-1zM929 944h1v1h-1zM1104 944h1v1h-1zM1279 944h1v1h-1zM1454 944h1v1h-1zM1629 944h1v1h-1zM230 949h1v1h-1zM405 949h1v1h-1zM580 949h1v1h-1zM755 949h1v1h-1zM929 949h1v1h-1zM1104 949h1v1h-1zM1279 949h1v1h-1zM1454 949h1v1h-1zM1629 949h1v1h-1zM230 953h1v1h-1zM405 953h1v1h-1zM580 953h1v1h-1zM755 953h1v1h-1zM929 953h1v1h-1zM1104 953h1v1h-1zM1279 953h1v1h-1zM1454 953h1v1h-1zM1629 953h1v1h-1zM230 958h1v1h-1zM405 958h1v1h-1zM580 958h1v1h-1zM755 958h1v1h-1zM929 958h1v1h-1zM1104 958h1v1h-1zM1279 958h1v1h-1zM1454 958h1v1h-1zM1629 958h1v1h-1zM230 962h1v1h-1zM405 962h1v1h-1zM580 962h1v1h-1zM755 962h1v1h-1zM929 962h1v1h-1zM1104 962h1v1h-1zM1279 962h1v1h-1zM1454 962h1v1h-1zM1629 962h1v1h-1zM230 967h1v1h-1zM405 967h1v1h-1zM580 967h1v1h-1zM755 967h1v1h-1zM929 967h1v1h-1zM1104 967h1v1h-1zM1279 967h1v1h-1zM1454 967h1v1h-1zM1629 967h1v1h-1zM230 972h1v1h-1zM405 972h1v1h-1zM580 972h1v1h-1zM755 972h1v1h-1zM929 972h1v1h-1zM1104 972h1v1h-1zM1279 972h1v1h-1zM1454 972h1v1h-1zM1629 972h1v1h-1zM230 976h1v1h-1zM405 976h1v1h-1zM580 976h1v1h-1zM755 976h1v1h-1zM929 976h1v1h-1zM1104 976h1v1h-1zM1279 976h1v1h-1zM1454 976h1v1h-1zM1629 976h1v1h-1zM230 981h1v1h-1zM405 981h1v1h-1zM580 981h1v1h-1zM755 981h1v1h-1zM929 981h1v1h-1zM1104 981h1v1h-1zM1279 981h1v1h-1zM1454 981h1v1h-1zM1629 981h1v1h-1zM230 986h1v1h-1zM405 986h1v1h-1zM580 986h1v1h-1zM755 986h1v1h-1zM929 986h1v1h-1zM1104 986h1v1h-1zM1279 986h1v1h-1zM1454 986h1v1h-1zM1629 986h1v1h-1zM230 990h1v1h-1zM405 990h1v1h-1zM580 990h1v1h-1zM755 990h1v1h-1zM929 990h1v1h-1zM1104 990h1v1h-1zM1279 990h1v1h-1zM1454 990h1v1h-1zM1629 990h1v1h-1z" fill="#c4c4c4" shape-rendering="crispEdges"/>
<rect x="3" y="57" width="1748" height="1" fill="#66686b"/>
<rect x="3" y="290" width="1748" height="2" fill="#757575"/>
<rect x="3" y="524" width="1748" height="2" fill="#757575"/>
<rect x="3" y="758" width="1748" height="2" fill="#757575"/>
<path d="M4 267.5H1751" stroke="#d2d2d2" stroke-width="1" stroke-dasharray="5 5" stroke-dashoffset="3" shape-rendering="crispEdges"/>
<path d="M4 431.5H1751" stroke="#d2d2d2" stroke-width="1" stroke-dasharray="5 5" stroke-dashoffset="3" shape-rendering="crispEdges"/>
<path d="M4 735.5H1751" stroke="#d2d2d2" stroke-width="1" stroke-dasharray="5 5" stroke-dashoffset="3" shape-rendering="crispEdges"/>
<path d="M4 958.5H1751" stroke="#d2d2d2" stroke-width="1" stroke-dasharray="5 5" stroke-dashoffset="3" shape-rendering="crispEdges"/>
<rect x="1715.7" y="73.5" width="35.3" height="16" fill="#000"/>
<text x="1746" y="86.2" fill="#f9ea1c" text-anchor="end">40 V</text>
<rect x="1715.7" y="96.5" width="35.3" height="16" fill="#000"/>
<text x="1746" y="109.2" fill="#f9ea1c" text-anchor="end">35 V</text>
<rect x="1715.7" y="120.5" width="35.3" height="16" fill="#000"/>
<text x="1746" y="133.2" fill="#f9ea1c" text-anchor="end">30 V</text>
<rect x="1715.7" y="143.5" width="35.3" height="16" fill="#000"/>
<text x="1746" y="156.2" fill="#f9ea1c" text-anchor="end">25 V</text>
<rect x="1715.7" y="166.5" width="35.3" height="16" fill="#000"/>
<text x="1746" y="179.2" fill="#f9ea1c" text-anchor="end">20 V</text>
<rect x="1715.7" y="189.5" width="35.3" height="16" fill="#000"/>
<text x="1746" y="202.2" fill="#f9ea1c" text-anchor="end">15 V</text>
<rect x="1715.7" y="212.5" width="35.3" height="16" fill="#000"/>
<text x="1746" y="225.2" fill="#f9ea1c" text-anchor="end">10 V</text>
<rect x="1723.1" y="236.5" width="27.9" height="16" fill="#000"/>
<text x="1746" y="249.2" fill="#f9ea1c" text-anchor="end">5 V</text>
<rect x="1723.1" y="259.5" width="27.9" height="16" fill="#000"/>
<text x="1746" y="272.2" fill="#f9ea1c" text-anchor="end">0 V</text>
<rect x="1723.1" y="307.5" width="27.9" height="16" fill="#000"/>
<text x="1746" y="320.2" fill="#8cc832" text-anchor="end">1 V</text>
<rect x="1697.2" y="330.5" width="53.8" height="16" fill="#000"/>
<text x="1746" y="343.2" fill="#8cc832" text-anchor="end">800 mV</text>
<rect x="1697.2" y="354.5" width="53.8" height="16" fill="#000"/>
<text x="1746" y="367.2" fill="#8cc832" text-anchor="end">600 mV</text>
<rect x="1697.2" y="377.5" width="53.8" height="16" fill="#000"/>
<text x="1746" y="390.2" fill="#8cc832" text-anchor="end">400 mV</text>
<rect x="1697.2" y="400.5" width="53.8" height="16" fill="#000"/>
<text x="1746" y="413.2" fill="#8cc832" text-anchor="end">200 mV</text>
<rect x="1723.1" y="423.5" width="27.9" height="16" fill="#000"/>
<text x="1746" y="436.2" fill="#8cc832" text-anchor="end">0 V</text>
<rect x="1692.7" y="446.5" width="58.3" height="16" fill="#000"/>
<text x="1746" y="459.2" fill="#8cc832" text-anchor="end">-200 mV</text>
<rect x="1692.7" y="470.5" width="58.3" height="16" fill="#000"/>
<text x="1746" y="483.2" fill="#8cc832" text-anchor="end">-400 mV</text>
<rect x="1692.7" y="493.5" width="58.3" height="16" fill="#000"/>
<text x="1746" y="506.2" fill="#8cc832" text-anchor="end">-600 mV</text>
<rect x="1671.8" y="541.5" width="79.2" height="16" fill="#000"/>
<text x="1746" y="554.2" fill="#f5901e" text-anchor="end">586.169 mT</text>
<rect x="1671.8" y="564.5" width="79.2" height="16" fill="#000"/>
<text x="1746" y="577.2" fill="#f5901e" text-anchor="end">512.898 mT</text>
<rect x="1671.8" y="588.5" width="79.2" height="16" fill="#000"/>
<text x="1746" y="601.2" fill="#f5901e" text-anchor="end">439.626 mT</text>
<rect x="1671.8" y="611.5" width="79.2" height="16" fill="#000"/>
<text x="1746" y="624.2" fill="#f5901e" text-anchor="end">366.355 mT</text>
<rect x="1671.8" y="634.5" width="79.2" height="16" fill="#000"/>
<text x="1746" y="647.2" fill="#f5901e" text-anchor="end">293.084 mT</text>
<rect x="1671.8" y="657.5" width="79.2" height="16" fill="#000"/>
<text x="1746" y="670.2" fill="#f5901e" text-anchor="end">219.813 mT</text>
<rect x="1671.8" y="680.5" width="79.2" height="16" fill="#000"/>
<text x="1746" y="693.2" fill="#f5901e" text-anchor="end">146.542 mT</text>
<rect x="1679.3" y="704.5" width="71.7" height="16" fill="#000"/>
<text x="1746" y="717.2" fill="#f5901e" text-anchor="end">73.271 mT</text>
<rect x="1724.0" y="727.5" width="27.0" height="16" fill="#000"/>
<text x="1746" y="740.2" fill="#f5901e" text-anchor="end">0 T</text>
<rect x="1668.0" y="764.5" width="83.0" height="16" fill="#000"/>
<text x="1746" y="777.2" fill="#7d3390" text-anchor="end">3.961525 kA</text>
<rect x="1668.0" y="787.5" width="83.0" height="16" fill="#000"/>
<text x="1746" y="800.2" fill="#7d3390" text-anchor="end">3.466335 kA</text>
<rect x="1669.0" y="811.5" width="82.0" height="16" fill="#000"/>
<text x="1746" y="824.2" fill="#7d3390" text-anchor="end">2.971144 kA</text>
<rect x="1668.0" y="834.5" width="83.0" height="16" fill="#000"/>
<text x="1746" y="847.2" fill="#7d3390" text-anchor="end">2.475953 kA</text>
<rect x="1668.0" y="857.5" width="83.0" height="16" fill="#000"/>
<text x="1746" y="870.2" fill="#7d3390" text-anchor="end">1.980763 kA</text>
<rect x="1668.0" y="880.5" width="83.0" height="16" fill="#000"/>
<text x="1746" y="893.2" fill="#7d3390" text-anchor="end">1.485572 kA</text>
<rect x="1682.8" y="903.5" width="68.2" height="16" fill="#000"/>
<text x="1746" y="916.2" fill="#7d3390" text-anchor="end">990.381 A</text>
<rect x="1682.8" y="927.5" width="68.2" height="16" fill="#000"/>
<text x="1746" y="940.2" fill="#7d3390" text-anchor="end">495.191 A</text>
<rect x="1723.8" y="950.5" width="27.2" height="16" fill="#000"/>
<text x="1746" y="963.2" fill="#7d3390" text-anchor="end">0 A</text>
<rect x="1678.3" y="973.5" width="72.7" height="16" fill="#000"/>
<text x="1746" y="986.2" fill="#7d3390" text-anchor="end">-495.191 A</text>
<rect x="44.8" y="975" width="21.3" height="15" fill="#000"/>
<text x="55.5" y="987.3" fill="#b9b9b9" text-anchor="middle" font-size="13" letter-spacing="0.1">0 s</text>
<rect x="214.3" y="975" width="32.2" height="15" fill="#000"/>
<text x="230.4" y="987.3" fill="#b9b9b9" text-anchor="middle" font-size="13" letter-spacing="0.1">4 ms</text>
<rect x="389.2" y="975" width="32.2" height="15" fill="#000"/>
<text x="405.3" y="987.3" fill="#b9b9b9" text-anchor="middle" font-size="13" letter-spacing="0.1">8 ms</text>
<rect x="560.5" y="975" width="39.4" height="15" fill="#000"/>
<text x="580.2" y="987.3" fill="#b9b9b9" text-anchor="middle" font-size="13" letter-spacing="0.1">12 ms</text>
<rect x="735.4" y="975" width="39.4" height="15" fill="#000"/>
<text x="755.1" y="987.3" fill="#b9b9b9" text-anchor="middle" font-size="13" letter-spacing="0.1">16 ms</text>
<rect x="910.3" y="975" width="39.4" height="15" fill="#000"/>
<text x="930.0" y="987.3" fill="#b9b9b9" text-anchor="middle" font-size="13" letter-spacing="0.1">20 ms</text>
<rect x="1085.2" y="975" width="39.4" height="15" fill="#000"/>
<text x="1104.9" y="987.3" fill="#b9b9b9" text-anchor="middle" font-size="13" letter-spacing="0.1">24 ms</text>
<rect x="1260.1" y="975" width="39.4" height="15" fill="#000"/>
<text x="1279.8" y="987.3" fill="#b9b9b9" text-anchor="middle" font-size="13" letter-spacing="0.1">28 ms</text>
<rect x="1435.0" y="975" width="39.4" height="15" fill="#000"/>
<text x="1454.7" y="987.3" fill="#b9b9b9" text-anchor="middle" font-size="13" letter-spacing="0.1">32 ms</text>
<rect x="1609.9" y="975" width="39.4" height="15" fill="#000"/>
<text x="1629.6" y="987.3" fill="#b9b9b9" text-anchor="middle" font-size="13" letter-spacing="0.1">36 ms</text>
<path d="M1710 64.5H1742Q1744.5 64.5 1744.5 67V99Z" fill="#4e4e4e"/>
<circle cx="1737.3" cy="71.5" r="4.2" fill="#555" stroke="#a6a6a6" stroke-width="1.2"/><path d="M1733.7 75.2L1727.8 80.8" stroke="#a6a6a6" stroke-width="2.2" stroke-linecap="round"/>
<path d="M55.5 95V993" stroke="#d8d8d8" stroke-width="1" stroke-dasharray="5 5" stroke-dashoffset="1" shape-rendering="crispEdges"/>
<path d="M3.0 265.9L4.5 265.7L6.0 266.0L7.5 265.7L9.0 265.9L10.5 265.8L12.0 265.6L13.5 265.8L15.0 265.6L16.5 265.8L18.0 265.6L19.5 265.5L21.0 265.7L22.5 266.1L24.0 265.8L25.5 265.7L27.0 266.0L28.5 266.3L30.0 266.2L31.5 266.0L33.0 266.4L34.5 265.8L36.0 266.2L37.5 265.9L39.0 265.7L40.5 265.6L42.0 265.7L43.5 266.1L45.0 265.8L46.5 266.0L48.0 266.1L49.5 265.9L51.0 266.0L52.5 265.7L54.0 265.5L54.5 266.0L55.3 255.0L56.0 278.0L56.8 262.0L58.0 265.5L82.0 266.0L82.6 271.0L83.2 253.0L84.0 263.0L85.0 255.0L86.0 260.0L87.0 256.0L88.0 258.0L90.0 256.0L91.5 254.5L93.0 253.0L94.5 251.5L96.0 250.0L97.5 248.5L99.0 247.5L100.5 246.8L102.0 246.1L103.5 245.4L105.0 244.7L106.5 243.9L108.0 243.1L109.5 242.2L111.0 241.3L112.5 240.5L114.0 239.6L115.5 238.8L117.0 238.2L118.5 237.7L120.0 237.1L121.5 236.6L123.0 236.0L124.5 235.6L126.0 235.1L127.5 234.7L129.0 234.2L130.5 233.8L132.0 233.4L133.5 232.9L135.0 232.5L136.5 232.0L138.0 231.6L139.5 231.1L141.0 230.7L142.5 230.4L144.0 230.0L145.5 229.6L147.0 229.2L148.5 228.8L150.0 228.5L151.5 228.1L153.0 227.7L154.5 227.3L156.0 227.0L157.5 226.6L159.0 226.3L160.5 226.1L162.0 225.8L163.5 225.5L165.0 225.2L166.5 225.0L168.0 224.7L169.5 224.4L171.0 224.2L172.5 223.9L174.0 223.6L175.5 223.3L177.0 223.1L178.5 222.8L180.0 222.5L181.5 222.2L183.0 222.2L184.5 222.2L186.0 222.2L187.5 222.2L189.0 222.2L190.5 222.2L192.0 222.2L193.5 222.5L195.0 224.8L196.5 227.2L198.0 228.2L199.5 229.1L201.0 229.9L202.5 230.7L204.0 231.2L205.5 231.6L207.0 232.0L208.5 232.4L210.0 232.8L211.5 233.1L213.0 233.5L214.5 233.9L216.0 234.3L217.5 234.7L219.0 235.1L220.5 235.5L222.0 235.9L223.5 236.3L225.0 236.7L226.5 237.1L228.0 237.5L229.5 237.9L231.0 238.2L232.5 238.6L234.0 238.9L235.5 239.3L237.0 239.6L238.5 240.0L240.0 240.3L241.5 240.4L243.0 240.6L244.5 240.7L246.0 240.8L247.5 240.9L249.0 241.1L250.5 241.2L252.0 241.3L253.5 241.4L255.0 241.6L256.5 241.2L258.0 242.3L259.5 242.5L261.0 242.4L262.5 242.0L264.0 239.4L265.5 241.0L267.0 242.1L268.5 242.6L270.0 242.8L271.5 241.7L273.0 241.1L274.5 241.6L276.0 242.2L277.5 242.1L279.0 241.1L280.5 242.1L282.0 242.2L283.5 241.3L285.0 241.2L286.5 242.2L288.0 241.7L289.5 242.0L291.0 241.1L292.5 242.0L294.0 241.2L295.5 242.2L297.0 241.5L298.5 238.3L300.0 241.5L301.5 242.2L303.0 242.4L304.5 241.4L306.0 241.0L307.5 241.3L309.0 241.2L310.5 241.9L312.0 241.5L313.5 242.0L315.0 242.3L316.5 241.7L318.0 240.6L319.5 238.0L321.0 240.2L322.5 241.1L324.0 240.8L325.5 241.0L327.0 240.3L328.5 240.3L330.0 241.1L331.5 241.1L333.0 241.7L334.5 241.4L336.0 241.1L337.5 240.9L339.0 240.8L340.5 241.1L342.0 241.7L343.5 241.3L345.0 241.5L346.5 240.4L348.0 239.9L349.5 239.6L351.0 240.6L352.5 240.1L354.0 240.6L355.5 241.3L357.0 240.4L358.5 240.3L360.0 241.3L361.5 240.3L363.0 240.4L364.5 239.9L366.0 238.6L367.5 238.8L369.0 240.6L370.5 239.8L372.0 240.6L373.5 239.8L375.0 239.3L376.5 239.5L378.0 239.8L379.5 240.6L381.0 239.8L382.5 240.2L384.0 239.5L385.5 240.2L387.0 239.5L388.5 240.1L390.0 239.4L391.5 239.1L393.0 239.6L394.5 240.0L396.0 239.6L397.5 239.9L399.0 239.3L400.5 239.0L402.0 239.2L403.5 240.1L405.0 240.0L406.5 238.1L408.0 238.9L409.5 239.5L411.0 239.5L412.5 238.9L414.0 239.1L415.5 239.9L417.0 239.6L418.5 240.3L420.0 240.3L421.5 239.9L423.0 239.2L424.5 238.5L426.0 239.2L427.5 238.5L429.0 239.3L430.5 239.3L432.0 238.6L433.5 238.6L435.0 238.5L436.5 239.3L438.0 238.9L439.5 239.4L441.0 236.9L442.5 238.4L444.0 237.8L445.5 237.1L447.0 237.0L448.5 235.1L450.0 237.0L451.5 237.6L453.0 238.1L454.5 238.7L456.0 238.0L457.5 237.4L459.0 238.0L460.5 238.6L462.0 238.5L463.5 238.7L465.0 238.4L466.5 238.7L468.0 238.9L469.5 239.1L471.0 238.8L472.5 237.6L474.0 237.6L475.5 238.4L477.0 238.4L478.5 238.5L480.0 237.4L481.5 238.2L483.0 238.2L484.5 237.5L486.0 237.5L487.5 237.5L489.0 237.5L490.5 238.8L492.0 238.4L493.5 238.8L495.0 238.8L496.5 238.0L498.0 237.9L499.5 238.0L501.0 237.6L502.5 237.9L504.0 238.7L505.5 238.5L507.0 238.7L508.5 238.2L510.0 238.2L511.5 237.5L513.0 239.7L514.5 239.2L516.0 238.6L517.5 238.3L519.0 238.1L520.5 239.4L522.0 239.7L523.5 240.0L525.0 239.0L526.5 237.8L528.0 239.0L529.5 238.7L531.0 238.6L532.5 237.1L534.0 239.7L535.5 240.1L537.0 240.1L538.5 239.3L540.0 240.0L541.5 239.2L543.0 238.7L544.5 238.2L546.0 238.3L547.5 238.3L549.0 238.7L550.5 238.6L552.0 239.5L553.5 239.4L555.0 239.9L556.5 239.8L558.0 239.7L559.5 239.8L561.0 239.0L562.5 239.7L564.0 239.3L565.5 238.8L567.0 239.7L568.5 239.6L570.0 239.4L571.5 238.5L573.0 238.1L574.5 238.4L576.0 239.1L577.5 238.6L579.0 237.9L580.5 237.7L582.0 237.0L583.5 237.0L585.0 237.0L586.5 236.2L588.0 236.2L589.5 236.2L591.0 238.0L592.5 238.2L594.0 238.7L595.5 237.9L597.0 237.8L598.5 238.7L600.0 237.7L601.5 238.8L603.0 238.3L604.5 237.3L606.0 238.4L607.5 238.8L609.0 237.9L610.5 237.4L612.0 238.0L613.5 238.4L615.0 238.6L616.5 238.4L618.0 238.6L619.5 239.0L621.0 238.1L622.5 237.6L624.0 238.2L625.5 237.4L627.0 237.8L628.5 237.5L630.0 236.9L631.5 236.8L633.0 236.7L634.5 236.0L636.0 235.0L637.5 234.9L639.0 234.2L640.5 233.3L642.0 233.1L643.5 232.9L645.0 232.3L646.5 231.6L648.0 232.4L649.5 233.8L651.0 234.4L652.5 235.0L654.0 236.1L655.5 237.2L657.0 238.1L658.5 236.6L660.0 235.8L661.5 234.7L663.0 234.3L664.5 234.0L666.0 234.5L667.5 234.2L669.0 233.8L670.5 232.4L672.0 231.2L673.5 230.7L675.0 229.9L677.5 229.0L679.0 223.0L680.0 208.0L681.0 160.0L681.3 135.3L682.5 140.0L683.7 135.8L689.0 135.3L690.0 136.6L691.5 138.6L693.0 140.6L694.5 142.6L696.0 145.1L697.5 147.8L699.0 150.5L700.5 153.2L702.0 156.0L703.5 158.6L705.0 160.7L706.5 162.8L708.0 165.0L709.5 167.1L711.0 169.2L712.5 171.4L714.0 173.2L715.5 174.7L717.0 176.2L718.5 177.7L720.0 179.2L721.5 180.7L723.0 182.2L724.5 183.5L726.0 184.7L727.5 186.0L729.0 187.2L730.5 188.5L732.0 189.7L733.5 190.9L735.0 191.8L736.5 192.7L738.0 193.6L739.5 194.5L741.0 195.3L742.5 196.2L744.0 197.0L745.5 197.6L747.0 198.3L748.5 198.9L750.0 199.6L751.5 200.2L753.0 200.8L754.5 201.5L756.0 202.0L757.5 202.5L759.0 202.9L760.5 203.4L762.0 203.9L763.5 204.3L765.0 204.8L766.5 205.2L768.0 205.6L769.5 206.0L771.0 206.4L772.5 206.8L774.0 207.2L775.5 207.6L777.0 208.0L778.5 208.4L780.0 208.8L781.5 209.1L783.0 209.4L784.5 209.7L786.0 210.0L787.5 210.2L789.0 210.5L790.5 210.8L792.0 211.1L793.5 211.3L795.0 211.6L796.5 212.0L798.0 212.3L799.5 212.6L801.0 212.9L802.5 213.2L804.0 213.5L805.5 213.9L807.0 214.5L808.5 215.1L810.0 215.7L811.5 216.3L813.0 216.8L814.5 217.4L816.0 218.0L817.5 218.6L819.0 219.2L820.5 219.8L822.0 220.4L823.5 221.0L825.0 221.6L826.5 222.2L828.0 222.7L829.5 223.3L831.0 223.9L832.5 224.5L834.0 225.0L835.5 225.6L837.0 226.1L838.5 226.6L840.0 227.2L841.5 227.7L843.0 228.3L844.5 228.6L846.0 228.3L847.5 228.0L849.0 227.6L850.5 227.3L852.0 227.0L853.5 226.7L855.0 226.7L856.5 226.7L858.0 226.7L859.5 226.7L861.0 226.7L862.5 226.7L864.0 226.7L865.5 226.7L867.0 226.7L868.5 226.7L870.0 226.9L871.5 227.1L873.0 227.3L874.5 227.5L876.0 227.8L877.5 228.0L879.0 228.2L880.5 228.5L882.0 229.0L883.5 229.5L885.0 230.0L886.5 230.5L888.0 231.0L889.5 231.5L891.0 232.1L892.5 232.8L894.0 233.4L895.5 234.1L897.0 234.8L898.5 235.4L900.0 236.1L901.5 236.7L903.0 237.4L904.5 237.9L906.0 238.5L907.5 239.1L909.0 239.6L910.5 240.2L912.0 240.7L913.5 241.3L915.0 241.9L916.5 242.4L918.0 242.9L919.5 243.3L921.0 243.7L922.5 244.2L924.0 244.6L925.5 245.0L927.0 245.4L928.5 245.9L930.0 246.3L931.5 246.6L933.0 246.9L934.5 247.2L936.0 247.5L937.5 247.8L939.0 248.0L940.5 248.3L942.0 248.6L943.5 248.9L945.0 249.2L946.5 249.4L948.0 249.5L949.5 249.7L951.0 249.8L952.5 250.0L954.0 250.2L955.5 250.3L957.0 250.5L958.5 250.6L960.0 250.8L961.5 250.9L963.0 251.1L964.5 251.2L966.0 251.4L967.5 251.5L969.0 251.6L970.5 251.8L972.0 251.9L973.5 251.8L975.0 251.5L976.5 251.2L978.0 250.8L979.5 250.5L981.0 250.1L982.5 249.8L984.0 249.4L985.5 249.1L987.0 248.8L988.5 248.4L990.0 248.1L991.5 247.7L993.0 247.5L994.5 247.7L996.0 247.8L997.5 248.0L999.0 248.1L1000.5 248.3L1002.0 248.4L1003.5 248.6L1005.0 248.7L1006.5 248.9L1008.0 249.2L1009.5 249.4L1011.0 249.7L1012.5 249.9L1014.0 250.1L1015.5 250.4L1017.0 250.6L1018.5 250.9L1020.0 251.1L1021.5 251.4L1023.0 251.6L1024.5 251.8L1026.0 252.1L1027.5 252.3L1029.0 252.6L1030.5 252.8L1032.0 253.0L1033.5 253.3L1035.0 253.5L1036.5 253.8L1038.0 254.0L1039.5 254.1L1041.0 254.2L1042.5 254.3L1044.0 254.4L1045.5 254.5L1047.0 254.6L1048.5 254.7L1050.0 254.8L1051.5 254.9L1053.0 255.0L1054.5 255.1L1056.0 255.2L1057.5 255.3L1059.0 255.4L1060.5 255.5L1062.0 255.6L1063.5 255.7L1065.0 255.8L1066.5 255.9L1068.0 256.0L1069.5 256.1L1071.0 256.2L1072.5 256.2L1074.0 256.2L1075.5 256.2L1077.0 256.2L1078.5 256.3L1080.0 256.3L1081.5 256.3L1083.0 256.3L1084.5 256.3L1086.0 256.3L1087.5 256.3L1089.0 256.3L1090.5 256.3L1092.0 256.3L1093.5 256.4L1095.0 256.4L1096.5 256.4L1098.0 256.4L1099.5 256.4L1101.0 256.7L1102.5 257.1L1104.0 257.5L1105.5 256.4L1107.0 255.2L1108.5 254.1L1110.0 253.0L1111.5 252.4L1113.0 252.3L1114.5 252.3L1116.0 252.2L1117.5 252.1L1119.0 252.0L1120.5 251.9L1122.0 251.8L1123.5 251.9L1125.0 252.0L1126.5 252.0L1128.0 252.1L1129.5 252.2L1131.0 252.3L1132.5 252.3L1134.0 252.4L1135.5 252.5L1137.0 252.5L1138.5 252.6L1140.0 252.7L1141.5 252.8L1143.0 252.8L1144.5 252.9L1146.0 253.0L1147.5 253.1L1149.0 253.1L1150.5 253.2L1152.0 253.3L1153.5 253.3L1155.0 253.4L1156.5 253.5L1158.0 253.6L1159.5 253.6L1161.0 253.7L1162.5 253.7L1164.0 253.8L1165.5 253.9L1167.0 253.9L1168.5 254.0L1170.0 254.0L1171.5 254.1L1173.0 254.2L1174.5 254.2L1176.0 254.3L1177.5 254.3L1179.0 254.4L1180.5 254.4L1182.0 254.5L1183.5 254.6L1185.0 254.6L1186.5 254.7L1188.0 254.9L1189.5 255.2L1191.0 255.4L1192.5 255.7L1194.0 256.0L1195.5 256.1L1197.0 255.8L1198.5 255.4L1200.0 255.4L1201.5 255.5L1203.0 255.6L1204.5 255.7L1206.0 255.8L1207.5 255.9L1209.0 256.1L1210.5 256.2L1212.0 256.3L1213.5 256.4L1215.0 256.5L1216.5 256.6L1218.0 256.7L1219.5 256.9L1221.0 257.0L1222.5 257.1L1224.0 257.2L1225.5 257.3L1227.0 257.4L1228.5 257.5L1230.0 257.6L1231.5 257.8L1233.0 257.9L1234.5 258.0L1236.0 258.1L1237.5 258.2L1239.0 258.2L1240.5 258.2L1242.0 258.2L1243.5 258.2L1245.0 258.2L1246.5 258.2L1248.0 258.2L1249.5 258.2L1251.0 258.2L1252.5 258.2L1254.0 258.2L1255.5 258.2L1257.0 258.2L1258.5 258.3L1260.0 258.3L1261.5 258.3L1263.0 258.3L1264.5 258.3L1266.0 258.3L1267.5 258.3L1269.0 258.3L1270.5 258.3L1272.0 258.3L1273.5 258.3L1275.0 258.3L1276.5 258.3L1278.0 258.3L1279.5 258.3L1281.0 258.4L1282.5 258.4L1284.0 258.5L1285.5 258.5L1287.0 258.6L1288.5 258.6L1290.0 258.6L1291.5 258.7L1293.0 258.7L1294.5 258.8L1296.0 258.8L1297.5 258.9L1299.0 258.9L1300.5 259.0L1302.0 259.0L1303.5 259.0L1305.0 259.0L1306.5 259.0L1308.0 259.0L1309.5 259.0L1311.0 259.1L1312.5 259.1L1314.0 259.1L1315.5 259.1L1317.0 259.1L1318.5 259.1L1320.0 259.1L1321.5 259.1L1323.0 259.1L1324.5 259.1L1326.0 259.1L1327.5 259.1L1329.0 259.1L1330.5 259.1L1332.0 259.2L1333.5 259.2L1335.0 259.2L1336.5 259.2L1338.0 259.2L1339.5 259.2L1341.0 259.2L1342.5 259.2L1344.0 259.2L1345.5 259.2L1347.0 259.2L1348.5 259.2L1350.0 259.2L1351.5 259.3L1353.0 259.3L1354.5 259.3L1356.0 259.3L1357.5 259.3L1359.0 259.3L1360.5 259.3L1362.0 259.3L1363.5 259.3L1365.0 259.3L1366.5 259.3L1368.0 259.3L1369.5 259.3L1371.0 259.4L1372.5 259.4L1374.0 259.4L1375.5 259.4L1377.0 259.4L1378.5 259.4L1380.0 259.4L1381.5 259.4L1383.0 259.4L1384.5 259.4L1386.0 259.4L1387.5 259.4L1389.0 259.5L1390.5 259.5L1392.0 259.5L1393.5 259.5L1395.0 259.5L1396.5 259.5L1398.0 259.5L1399.5 259.5L1401.0 259.5L1402.5 259.5L1404.0 259.5L1405.5 259.5L1407.0 259.5L1408.5 259.6L1410.0 259.6L1411.5 259.6L1413.0 259.6L1414.5 259.6L1416.0 259.6L1417.5 259.6L1419.0 259.6L1420.5 259.6L1422.0 259.6L1423.5 259.6L1425.0 259.6L1426.5 259.6L1428.0 259.7L1429.5 259.7L1431.0 259.7L1432.5 259.7L1434.0 259.7L1435.5 259.7L1437.0 259.7L1438.5 259.7L1440.0 259.7L1441.5 259.7L1443.0 259.7L1444.5 259.7L1446.0 259.8L1447.5 259.8L1449.0 259.8L1450.5 259.8L1452.0 259.8L1453.5 259.8L1455.0 259.8L1456.5 259.8L1458.0 259.8L1459.5 259.8L1461.0 259.8L1462.5 259.8L1464.0 259.8L1465.5 259.9L1467.0 259.9L1468.5 259.9L1470.0 259.9L1471.5 259.9L1473.0 259.9L1474.5 259.9L1476.0 259.9L1477.5 259.9L1479.0 259.9L1480.5 259.9L1482.0 259.9L1483.5 259.9L1485.0 260.0L1486.5 260.0L1488.0 260.0L1489.5 260.0L1491.0 260.0L1492.5 260.0L1494.0 260.0L1495.5 260.0L1497.0 260.0L1498.5 260.0L1500.0 260.0L1501.5 260.0L1503.0 260.1L1504.5 260.1L1506.0 260.1L1507.5 260.1L1509.0 260.1L1510.5 260.1L1512.0 260.1L1513.5 260.1L1515.0 260.1L1516.5 260.1L1518.0 260.1L1519.5 260.1L1521.0 260.1L1522.5 260.2L1524.0 260.2L1525.5 260.2L1527.0 260.2L1528.5 260.2L1530.0 260.2L1531.5 260.2L1533.0 260.2L1534.5 260.2L1536.0 260.2L1537.5 260.2L1539.0 260.2L1540.5 260.2L1542.0 260.3L1543.5 260.3L1545.0 260.3L1546.5 260.3L1548.0 260.3L1549.5 260.3L1551.0 260.3L1552.5 260.3L1554.0 260.3L1555.5 260.3L1557.0 260.3L1558.5 260.3L1560.0 260.3L1561.5 260.4L1563.0 260.4L1564.5 260.4L1566.0 260.4L1567.5 260.4L1569.0 260.4L1570.5 260.4L1572.0 260.4L1573.5 260.5L1575.0 260.5L1576.5 260.5L1578.0 260.5L1579.5 260.5L1581.0 260.6L1582.5 260.6L1584.0 260.6L1585.5 260.6L1587.0 260.7L1588.5 260.7L1590.0 260.7L1591.5 260.7L1593.0 260.8L1594.5 260.8L1596.0 260.8L1597.5 260.8L1599.0 260.8L1600.5 260.9L1602.0 260.9L1603.5 260.9L1605.0 260.9L1606.5 261.0L1608.0 261.0L1609.5 261.0L1611.0 261.0L1612.5 261.1L1614.0 261.1L1615.5 261.1L1617.0 261.1L1618.5 261.1L1620.0 261.2L1621.5 261.2L1623.0 261.2L1624.5 261.2L1626.0 261.3L1627.5 261.3L1629.0 261.3L1630.5 261.7L1632.0 262.0L1633.5 262.3L1635.0 262.7L1636.5 263.0L1638.0 263.3L1639.5 263.7L1641.0 263.8L1642.5 263.9L1644.0 264.0L1645.5 264.1L1647.0 264.2L1648.5 264.3L1650.0 264.4L1651.5 264.5L1653.0 264.6L1654.5 264.7L1656.0 264.8L1657.5 264.9L1659.0 265.0L1660.5 265.1L1662.0 265.2L1663.5 265.3L1665.0 265.4L1666.5 265.5L1668.0 265.6L1669.5 265.7L1671.0 265.8L1672.5 265.8L1674.0 265.9L1675.5 266.0L1677.0 266.1L1678.5 266.1L1680.0 266.2L1681.5 266.3L1683.0 266.4L1684.5 266.4L1686.0 266.5L1687.5 266.6L1689.0 266.6L1690.5 266.6L1692.0 266.3L1693.5 266.0L1695.0 265.7L1696.5 265.4L1698.0 265.2L1699.5 264.9L1701.0 264.6L1702.5 264.4L1704.0 264.1L1705.5 263.9L1707.0 263.6L1708.5 263.4L1710.0 263.1L1711.5 262.9L1713.0 262.7L1714.5 262.5L1716.0 262.4L1717.5 262.2L1719.0 262.1L1720.5 261.9L1722.0 261.9L1723.5 261.9L1725.0 261.9L1726.5 261.9L1728.0 261.9L1729.5 261.9L1731.0 261.9L1732.5 261.9L1734.0 261.9L1735.5 261.9L1737.0 262.0L1738.5 262.0L1740.0 262.0L1741.5 262.0L1743.0 262.0L1744.5 262.0L1746.0 262.0L1747.5 262.0L1749.0 262.0L1750.5 262.0" fill="none" stroke="#f9ea1c" stroke-width="1.45" stroke-linejoin="round"/>
<path d="M3.0 430.5L195.0 430.5L200.0 428.7L215.0 421.0L230.0 413.0L240.0 408.7L250.0 405.7L260.0 405.2L275.0 405.7L287.5 407.5L310.0 409.2L330.0 410.0L405.0 410.0L440.0 408.7L460.0 407.7L492.5 407.5L505.0 405.5L567.5 405.5L571.0 404.2L577.5 405.5L590.0 404.5L592.5 405.5L617.5 406.5L645.0 406.5L647.5 405.5L655.0 406.5L667.5 407.5L678.7 407.5L681.0 403.0L683.7 402.0L687.5 403.2L695.0 408.7L705.0 415.0L717.5 420.0L735.0 424.2L755.0 427.5L775.0 429.0L820.0 430.0L1751.0 430.5" fill="none" stroke="#8cc832" stroke-width="1.3" stroke-linejoin="round"/>
<path d="M43.0 734.5L54.0 734.5L55.0 734.2L63.0 732.1L71.0 729.9L79.0 727.8L87.0 725.7L95.0 723.6L103.0 721.4L111.0 719.4L119.0 717.3L127.0 715.2L135.0 713.1L143.0 711.1L151.0 709.0L159.0 707.0L167.0 705.0L175.0 703.0L183.0 701.0L191.0 699.0L199.0 697.1L207.0 695.1L215.0 693.2L223.0 691.2L231.0 689.3L239.0 687.4L247.0 685.5L255.0 683.6L263.0 681.7L271.0 679.9L279.0 678.0L287.0 676.2L295.0 674.3L303.0 672.5L311.0 670.7L319.0 668.9L327.0 667.2L335.0 665.4L343.0 663.6L351.0 661.9L359.0 660.2L367.0 658.5L375.0 656.8L383.0 655.1L391.0 653.4L399.0 651.7L407.0 650.1L415.0 648.4L423.0 646.8L431.0 645.2L439.0 643.6L447.0 642.0L455.0 640.4L463.0 638.9L471.0 637.3L479.0 635.8L487.0 634.3L495.0 632.7L503.0 631.2L511.0 629.8L519.0 628.3L527.0 626.8L535.0 625.4L543.0 624.0L551.0 622.5L559.0 621.1L567.0 619.7L575.0 618.4L583.0 617.0L591.0 615.6L599.0 614.3L607.0 613.0L615.0 611.7L623.0 610.4L631.0 609.1L639.0 607.8L647.0 606.5L655.0 605.3L663.0 604.1L671.0 602.9L679.0 601.6L687.0 600.5L695.0 599.3L703.0 598.1L711.0 597.0L719.0 595.8L727.0 594.7L735.0 593.6L743.0 592.5L751.0 591.4L759.0 590.4L767.0 589.3L775.0 588.3L783.0 587.2L791.0 586.2L799.0 585.2L807.0 584.2L815.0 583.3L823.0 582.3L831.0 581.4L839.0 580.4L847.0 579.5L855.0 578.6L863.0 577.7L871.0 576.8L879.0 576.0L887.0 575.1L895.0 574.3L903.0 573.5L911.0 572.7L919.0 571.9L927.0 571.1L935.0 570.3L943.0 569.6L951.0 568.8L959.0 568.1L967.0 567.4L975.0 566.7L983.0 566.0L991.0 565.4L999.0 564.7L1007.0 564.1L1015.0 563.4L1023.0 562.8L1031.0 562.2L1039.0 561.6L1047.0 561.1L1055.0 560.5L1063.0 560.0L1071.0 559.4L1079.0 558.9L1087.0 558.4L1095.0 557.9L1103.0 557.4L1111.0 557.0L1119.0 556.5L1127.0 556.1L1135.0 555.7L1143.0 555.3L1151.0 554.9L1159.0 554.5L1167.0 554.1L1175.0 553.8L1183.0 553.4L1191.0 553.1L1199.0 552.8L1207.0 552.5L1215.0 552.2L1223.0 551.9L1231.0 551.7L1239.0 551.4L1247.0 551.2L1255.0 551.0L1263.0 550.8L1271.0 550.6L1279.0 550.4L1287.0 550.2L1295.0 550.1L1303.0 549.9L1311.0 549.8L1319.0 549.7L1327.0 549.6L1335.0 549.5L1343.0 549.4L1351.0 549.4L1359.0 549.3L1367.0 549.3L1375.0 549.3L1383.0 549.3L1391.0 549.3L1399.0 549.3L1407.0 549.3L1415.0 549.4L1423.0 549.4L1431.0 549.5L1439.0 549.6L1447.0 549.7L1455.0 549.8L1463.0 549.9L1471.0 550.0L1479.0 550.2L1487.0 550.3L1495.0 550.5L1503.0 550.7L1511.0 550.9L1519.0 551.1L1527.0 551.3L1535.0 551.5L1543.0 551.8L1551.0 552.1L1559.0 552.3L1567.0 552.6L1575.0 552.9L1583.0 553.2L1591.0 553.5L1599.0 553.9L1607.0 554.2L1615.0 554.6L1623.0 554.9L1631.0 555.3L1639.0 555.7L1647.0 556.1L1655.0 556.5L1663.0 556.9L1671.0 557.4L1679.0 557.8L1687.0 558.3L1695.0 558.7L1703.0 559.2L1711.0 559.7L1719.0 560.2L1727.0 560.7L1735.0 561.3L1743.0 561.8L1751.0 562.4L1751.0 562.4" fill="none" stroke="#f5901e" stroke-width="1.2" stroke-linejoin="round"/>
<path d="M43.0 958.2L44.5 958.2L46.0 958.2L47.5 958.2L49.0 958.2L50.5 958.2L52.0 958.2L53.5 958.2L55.0 958.2L55.4 946.0L56.0 967.5L56.8 957.0L58.0 958.5L82.0 958.5L82.8 951.0L83.5 968.7L84.2 958.0L85.0 964.0L86.0 960.0L87.0 962.5L90.0 960.7L91.0 960.7L92.5 960.7L94.0 960.5L95.5 960.5L97.0 960.5L98.5 960.0L100.0 959.8L101.5 959.7L103.0 960.0L104.5 959.9L106.0 959.9L107.5 959.8L109.0 959.8L110.5 959.7L112.0 959.6L113.5 959.7L115.0 959.7L116.5 959.8L118.0 959.7L119.5 959.8L121.0 959.8L122.5 959.8L124.0 959.6L125.5 959.3L127.0 959.5L128.5 959.6L130.0 959.6L131.5 959.4L133.0 959.4L134.5 959.1L136.0 959.2L137.5 959.2L139.0 959.0L140.5 958.8L142.0 959.0L143.5 959.2L145.0 958.8L146.5 959.0L148.0 958.8L149.5 958.6L151.0 958.6L152.5 958.8L154.0 958.9L155.5 958.6L157.0 958.7L158.5 958.4L160.0 958.6L161.5 958.5L163.0 958.7L164.5 958.8L166.0 958.6L167.5 958.7L169.0 958.5L170.5 958.2L172.0 958.3L173.5 958.1L175.0 958.1L176.5 958.1L178.0 958.2L179.5 958.0L181.0 957.9L182.5 958.2L184.0 958.1L185.5 958.3L187.0 958.3L188.5 958.1L190.0 958.0L191.5 957.4L193.0 956.4L194.5 954.5L196.0 952.6L197.5 950.7L199.0 948.8L200.5 947.4L202.0 946.0L203.5 945.2L205.0 943.5L206.5 942.3L208.0 941.9L209.5 940.6L211.0 939.4L212.5 937.5L214.0 936.6L215.5 935.8L217.0 934.1L218.5 933.4L220.0 932.6L221.5 930.8L223.0 930.2L224.5 929.0L226.0 928.2L227.5 926.8L229.0 926.0L230.5 925.0L232.0 923.1L233.5 921.6L235.0 921.1L236.5 920.7L238.0 918.9L239.5 917.8L241.0 916.8L242.5 915.4L244.0 914.2L245.5 913.0L247.0 911.9L248.5 911.1L250.0 909.7L251.5 908.8L253.0 908.4L254.5 906.7L256.0 906.1L257.5 905.6L259.0 904.3L260.5 903.1L262.0 902.8L263.5 901.4L265.0 900.2L266.5 899.6L268.0 899.3L269.5 898.0L271.0 897.3L272.5 896.5L274.0 896.4L275.5 895.5L277.0 895.2L278.5 893.7L280.0 892.9L281.5 892.6L283.0 892.3L284.5 891.3L286.0 890.1L287.5 889.1L289.0 888.8L290.5 887.8L292.0 887.8L293.5 887.4L295.0 886.0L296.5 884.7L298.0 884.2L299.5 883.1L301.0 882.2L302.5 880.6L304.0 879.0L305.5 878.0L307.0 878.2L308.5 877.3L310.0 876.6L311.5 876.2L313.0 875.7L314.5 875.2L316.0 875.3L317.5 874.1L319.0 873.0L320.5 873.5L322.0 873.4L323.5 873.1L325.0 872.0L326.5 871.6L328.0 871.0L329.5 869.3L331.0 868.8L332.5 868.3L334.0 867.4L335.5 866.3L337.0 865.1L338.5 864.3L340.0 863.5L341.5 862.6L343.0 862.6L344.5 861.8L346.0 861.8L347.5 860.5L349.0 860.7L350.5 860.2L352.0 859.8L353.5 859.2L355.0 858.5L356.5 857.4L358.0 855.8L359.5 855.6L361.0 854.4L362.5 853.6L364.0 853.4L365.5 852.7L367.0 851.8L368.5 851.7L370.0 850.9L371.5 849.8L373.0 848.8L374.5 848.7L376.0 847.8L377.5 847.4L379.0 846.3L380.5 845.2L382.0 844.8L383.5 844.6L385.0 843.3L386.5 843.1L388.0 842.8L389.5 842.1L391.0 841.5L392.5 839.8L394.0 839.4L395.5 839.2L397.0 837.7L398.5 836.9L400.0 836.2L401.5 835.9L403.0 835.2L404.5 834.6L406.0 834.4L407.5 832.9L409.0 832.0L410.5 831.4L412.0 830.7L413.5 830.0L415.0 830.5L416.5 830.3L418.0 828.8L419.5 828.4L421.0 827.6L422.5 826.9L424.0 826.3L425.5 826.1L427.0 825.6L428.5 824.8L430.0 824.0L431.5 823.5L433.0 822.7L434.5 822.6L436.0 822.5L437.5 821.7L439.0 820.7L440.5 820.1L442.0 819.8L443.5 819.6L445.0 819.5L446.5 818.8L448.0 818.9L449.5 818.4L451.0 817.8L452.5 817.2L454.0 816.9L455.5 816.8L457.0 816.2L458.5 816.1L460.0 815.6L461.5 814.7L463.0 814.3L464.5 814.1L466.0 812.9L467.5 812.5L469.0 812.0L470.5 812.1L472.0 811.9L473.5 810.7L475.0 810.6L476.5 809.9L478.0 808.5L479.5 807.7L481.0 806.7L482.5 807.1L484.0 806.8L485.5 806.8L487.0 806.5L488.5 806.0L490.0 805.6L491.5 805.1L493.0 804.3L494.5 805.0L496.0 804.8L497.5 803.5L499.0 803.0L500.5 801.1L502.0 799.6L503.5 798.7L505.0 799.0L506.5 797.8L508.0 796.7L509.5 796.9L511.0 795.7L512.5 795.7L514.0 795.1L515.5 794.6L517.0 794.2L518.5 793.2L520.0 792.6L521.5 791.2L523.0 791.3L524.5 790.7L526.0 790.5L527.5 789.3L529.0 789.4L530.5 789.4L532.0 788.0L533.5 787.4L535.0 787.3L536.5 787.3L538.0 786.2L539.5 785.4L541.0 784.9L542.5 784.9L544.0 785.2L545.5 784.8L547.0 784.5L548.5 784.3L550.0 784.1L551.5 784.0L553.0 783.6L554.5 784.1L556.0 785.1L557.5 784.9L559.0 785.4L560.5 784.9L562.0 785.5L563.5 785.9L565.0 786.1L566.5 785.9L568.0 785.8L569.5 785.9L571.0 786.3L572.5 785.5L574.0 785.1L575.5 785.8L577.0 786.3L578.5 786.0L580.0 785.8L581.5 786.9L583.0 787.1L584.5 787.9L586.0 788.6L587.5 789.8L589.0 789.4L590.5 788.9L592.0 789.1L593.5 789.4L595.0 788.5L596.5 788.5L598.0 788.1L599.5 789.0L601.0 789.2L602.5 789.1L604.0 789.2L605.5 789.2L607.0 790.0L608.5 790.5L610.0 790.6L611.5 790.8L613.0 790.8L614.5 791.4L616.0 790.8L617.5 791.7L619.0 791.4L620.5 791.4L622.0 791.3L623.5 792.0L625.0 792.7L626.5 792.9L628.0 793.2L629.5 793.9L631.0 794.6L632.5 794.7L634.0 795.9L635.5 797.3L637.0 797.8L638.5 798.3L640.0 799.1L641.5 800.6L643.0 802.1L644.5 804.4L646.0 806.4L647.5 807.5L649.0 806.7L650.5 806.3L652.0 805.7L653.5 806.0L655.0 806.1L656.5 806.0L658.0 805.5L659.5 807.3L661.0 808.1L662.5 809.4L664.0 809.8L665.5 809.3L667.0 809.1L668.5 810.0L670.0 809.8L671.5 810.8L673.0 812.1L674.5 813.4L676.0 813.7L677.0 815.0L679.5 825.0L680.5 860.0L681.2 917.5L683.7 927.5L687.5 938.7L693.7 947.5L695.5 948.2L697.0 948.8L698.5 949.4L700.0 950.1L701.5 950.6L703.0 951.3L704.5 951.9L706.0 952.2L707.5 952.5L709.0 952.9L710.5 953.2L712.0 953.4L713.5 953.8L715.0 954.2L716.5 954.4L718.0 954.7L719.5 954.8L721.0 955.2L722.5 955.4L724.0 955.8L725.5 956.0L727.0 956.2L728.5 956.4L730.0 956.7L731.5 956.9L733.0 957.0L734.5 957.4L736.0 957.7L737.5 957.7L739.0 958.1L740.5 958.2L742.0 958.3L743.5 958.5L745.0 958.7L746.5 958.8L748.0 958.9L749.5 959.0L751.0 959.1L752.5 959.2L754.0 959.2L755.5 959.5L757.0 959.7L758.5 959.8L760.0 960.0L761.5 960.0L763.0 960.0L764.5 960.1L766.0 960.4L767.5 960.3L769.0 960.5L770.5 960.5L772.0 960.8L773.5 960.8L775.0 960.9L776.5 961.0L778.0 961.2L779.5 961.4L781.0 961.4L782.5 961.6L784.0 961.6L785.5 961.6L787.0 961.6L788.5 961.6L790.0 961.8L791.5 962.0L793.0 961.9L794.5 961.9L796.0 962.0L797.5 962.1L799.0 962.2L800.5 962.3L802.0 962.3L803.5 962.2L805.0 962.2L806.5 962.2L808.0 962.3L809.5 962.4L811.0 962.4L812.5 962.4L814.0 962.6L815.5 962.5L817.0 962.7L818.5 962.8L820.0 962.9L821.5 962.8L823.0 962.9L824.5 962.9L826.0 963.0L827.5 963.1L829.0 963.1L830.5 963.1L832.0 963.2L833.5 963.2L835.0 963.2L836.5 963.5L838.0 963.5L839.5 963.8L841.0 964.0L842.5 964.2L844.0 964.4L845.5 964.6L847.0 964.7L848.5 964.9L850.0 965.0L851.5 965.3L853.0 965.5L854.5 965.5L856.0 965.5L857.5 965.6L859.0 965.7L860.5 965.5L862.0 965.6L863.5 965.6L865.0 965.4L866.5 965.4L868.0 965.4L869.5 965.3L871.0 965.4L872.5 965.6L874.0 965.5L875.5 965.6L877.0 965.6L878.5 965.4L880.0 965.6L881.5 965.6L883.0 965.6L884.5 965.6L886.0 965.6L887.5 965.5L889.0 965.6L890.5 965.7L892.0 965.7L893.5 965.6L895.0 965.6L896.5 965.5L898.0 965.4L899.5 965.3L901.0 965.3L902.5 965.3L904.0 965.3L905.5 965.5L907.0 965.9L908.5 966.2L910.0 966.5L911.5 966.5L913.0 966.5L914.5 966.5L916.0 966.6L917.5 966.5L919.0 966.4L920.5 966.6L922.0 966.6L923.5 966.5L925.0 966.5L926.5 966.5L928.0 966.5L929.5 966.4L931.0 966.3L932.5 966.3L934.0 966.5L935.5 966.4L937.0 966.4L938.5 966.4L940.0 966.4L941.5 966.4L943.0 966.5L944.5 966.6L946.0 966.6L947.5 966.7L949.0 966.8L950.5 966.9L952.0 966.9L953.5 966.9L955.0 967.1L956.5 967.2L958.0 967.4L959.5 967.3L961.0 967.4L962.5 967.5L964.0 967.5L965.5 967.8L967.0 967.7L968.5 967.7L970.0 967.9L971.5 967.9L973.0 968.1L974.5 968.1L976.0 968.1L977.5 968.1L979.0 968.4L980.5 968.4L982.0 968.6L983.5 968.6L985.0 968.8L986.5 968.7L988.0 968.5L989.5 968.4L991.0 968.5L992.5 968.5L994.0 968.3L995.5 968.2L997.0 968.2L998.5 968.3L1000.0 968.2L1001.5 967.9L1003.0 967.8L1004.5 967.7L1006.0 967.6L1007.5 967.6L1009.0 967.5L1010.5 967.6L1012.0 967.7L1013.5 967.5L1015.0 967.6L1016.5 967.4L1018.0 967.5L1019.5 967.5L1021.0 967.6L1022.5 967.3L1024.0 967.3L1025.5 967.4L1027.0 967.5L1028.5 967.3L1030.0 967.3L1031.5 967.4L1033.0 967.2L1034.5 967.2L1036.0 967.2L1037.5 967.3L1039.0 967.4L1040.5 967.3L1042.0 967.3L1043.5 967.4L1045.0 967.4L1046.5 967.3L1048.0 967.4L1049.5 967.3L1051.0 967.2L1052.5 967.2L1054.0 967.3L1055.5 967.2L1057.0 967.2L1058.5 967.1L1060.0 967.2L1061.5 967.2L1063.0 967.3L1064.5 967.2L1066.0 967.2L1067.5 967.1L1069.0 967.2L1070.5 967.0L1072.0 967.1L1073.5 967.2L1075.0 967.2L1076.5 967.0L1078.0 967.0L1079.5 967.2L1081.0 967.2L1082.5 967.2L1084.0 967.3L1085.5 967.1L1087.0 967.2L1088.5 967.2L1090.0 967.1L1091.5 967.0L1093.0 966.9L1094.5 967.0L1096.0 967.1L1097.5 967.0L1099.0 967.0L1100.5 966.9L1102.0 966.8L1103.5 967.0L1105.0 967.3L1106.5 967.7L1108.0 968.2L1109.5 968.8L1111.0 968.9L1112.5 968.6L1114.0 968.4L1115.5 968.5L1117.0 968.2L1118.5 968.1L1120.0 967.9L1121.5 967.9L1123.0 967.8L1124.5 967.8L1126.0 967.7L1127.5 967.6L1129.0 967.5L1130.5 967.4L1132.0 967.5L1133.5 967.4L1135.0 967.3L1136.5 967.5L1138.0 967.3L1139.5 967.4L1141.0 967.2L1142.5 967.2L1144.0 967.1L1145.5 967.2L1147.0 967.2L1148.5 967.2L1150.0 967.2L1151.5 967.2L1153.0 967.0L1154.5 967.0L1156.0 966.9L1157.5 966.8L1159.0 966.9L1160.5 966.8L1162.0 966.9L1163.5 966.7L1165.0 966.7L1166.5 966.6L1168.0 966.7L1169.5 966.5L1171.0 966.4L1172.5 966.4L1174.0 966.3L1175.5 966.4L1177.0 966.4L1178.5 966.3L1180.0 966.3L1181.5 966.3L1183.0 966.1L1184.5 966.1L1186.0 966.2L1187.5 966.1L1189.0 966.0L1190.5 965.9L1192.0 965.8L1193.5 965.8L1195.0 966.0L1196.5 966.0L1198.0 966.0L1199.5 966.0L1201.0 965.9L1202.5 966.0L1204.0 965.8L1205.5 965.7L1207.0 965.8L1208.5 965.8L1210.0 965.8L1211.5 965.7L1213.0 965.7L1214.5 965.6L1216.0 965.7L1217.5 965.7L1219.0 965.5L1220.5 965.6L1222.0 965.4L1223.5 965.2L1225.0 965.3L1226.5 965.3L1228.0 965.3L1229.5 965.3L1231.0 965.1L1232.5 965.2L1234.0 965.1L1235.5 965.1L1237.0 965.0L1238.5 965.1L1240.0 965.1L1241.5 965.0L1243.0 964.9L1244.5 964.9L1246.0 964.9L1247.5 964.8L1249.0 964.7L1250.5 964.8L1252.0 964.9L1253.5 964.9L1255.0 965.0L1256.5 964.9L1258.0 964.8L1259.5 964.6L1261.0 964.6L1262.5 964.6L1264.0 964.6L1265.5 964.6L1267.0 964.5L1268.5 964.6L1270.0 964.4L1271.5 964.4L1273.0 964.5L1274.5 964.5L1276.0 964.4L1277.5 964.3L1279.0 964.3L1280.5 964.1L1282.0 964.1L1283.5 964.1L1285.0 964.2L1286.5 964.0L1288.0 963.9L1289.5 963.9L1291.0 964.0L1292.5 964.0L1294.0 964.1L1295.5 964.1L1297.0 964.1L1298.5 963.8L1300.0 963.8L1301.5 963.6L1303.0 963.7L1304.5 963.7L1306.0 963.6L1307.5 963.6L1309.0 963.5L1310.5 963.5L1312.0 963.5L1313.5 963.6L1315.0 963.5L1316.5 963.4L1318.0 963.3L1319.5 963.4L1321.0 963.4L1322.5 963.4L1324.0 963.5L1325.5 963.5L1327.0 963.3L1328.5 963.2L1330.0 963.3L1331.5 963.3L1333.0 963.2L1334.5 963.3L1336.0 963.2L1337.5 963.1L1339.0 962.9L1340.5 962.8L1342.0 963.0L1343.5 963.1L1345.0 963.1L1346.5 963.0L1348.0 962.9L1349.5 963.0L1351.0 963.0L1352.5 962.9L1354.0 962.8L1355.5 962.7L1357.0 962.6L1358.5 962.5L1360.0 962.6L1361.5 962.7L1363.0 962.6L1364.5 962.5L1366.0 962.5L1367.5 962.4L1369.0 962.5L1370.5 962.4L1372.0 962.5L1373.5 962.3L1375.0 962.3L1376.5 962.3L1378.0 962.2L1379.5 962.3L1381.0 962.3L1382.5 962.4L1384.0 962.3L1385.5 962.0L1387.0 962.1L1388.5 962.1L1390.0 962.0L1391.5 961.9L1393.0 962.0L1394.5 962.1L1396.0 961.9L1397.5 961.9L1399.0 961.8L1400.5 961.8L1402.0 961.9L1403.5 962.0L1405.0 961.9L1406.5 961.7L1408.0 961.8L1409.5 961.6L1411.0 961.6L1412.5 961.7L1414.0 961.5L1415.5 961.5L1417.0 961.6L1418.5 961.6L1420.0 961.5L1421.5 961.4L1423.0 961.3L1424.5 961.2L1426.0 961.2L1427.5 961.4L1429.0 961.2L1430.5 961.1L1432.0 961.1L1433.5 961.0L1435.0 961.1L1436.5 961.2L1438.0 961.2L1439.5 961.2L1441.0 961.2L1442.5 960.9L1444.0 960.9L1445.5 961.0L1447.0 960.8L1448.5 960.8L1450.0 960.8L1451.5 960.8L1453.0 960.8L1454.5 960.6L1456.0 960.6L1457.5 960.8L1459.0 960.7L1460.5 960.8L1462.0 960.6L1463.5 960.8L1465.0 960.7L1466.5 960.7L1468.0 960.5L1469.5 960.4L1471.0 960.5L1472.5 960.4L1474.0 960.4L1475.5 960.5L1477.0 960.6L1478.5 960.4L1480.0 960.5L1481.5 960.4L1483.0 960.4L1484.5 960.2L1486.0 960.2L1487.5 960.4L1489.0 960.3L1490.5 960.1L1492.0 960.1L1493.5 960.0L1495.0 960.1L1496.5 960.2L1498.0 960.0L1499.5 960.0L1501.0 960.2L1502.5 960.2L1504.0 960.3L1505.5 960.1L1507.0 960.0L1508.5 960.1L1510.0 960.0L1511.5 960.0L1513.0 959.9L1514.5 959.8L1516.0 959.8L1517.5 959.9L1519.0 959.9L1520.5 959.9L1522.0 959.8L1523.5 959.8L1525.0 959.7L1526.5 959.7L1528.0 959.8L1529.5 959.6L1531.0 959.7L1532.5 959.8L1534.0 959.8L1535.5 959.6L1537.0 959.7L1538.5 959.7L1540.0 959.5L1541.5 959.4L1543.0 959.4L1544.5 959.3L1546.0 959.5L1547.5 959.4L1549.0 959.5L1550.5 959.3L1552.0 959.2L1553.5 959.3L1555.0 959.4L1556.5 959.5L1558.0 959.4L1559.5 959.3L1561.0 959.3L1562.5 959.1L1564.0 959.1L1565.5 959.1L1567.0 959.0L1568.5 959.1L1570.0 959.0L1571.5 959.0L1573.0 959.0L1574.5 958.9L1576.0 958.9L1577.5 959.0L1579.0 959.1L1580.5 959.1L1582.0 959.1L1583.5 959.0L1585.0 958.9L1586.5 959.0L1588.0 958.8L1589.5 958.7L1591.0 958.7L1592.5 958.8L1594.0 958.7L1595.5 958.7L1597.0 958.6L1598.5 958.8L1600.0 958.7L1601.5 958.6L1603.0 958.6L1604.5 958.7L1606.0 958.7L1607.5 958.6L1609.0 958.5L1610.5 958.5L1612.0 958.3L1613.5 958.4L1615.0 958.5L1616.5 958.5L1618.0 958.3L1619.5 958.4L1621.0 958.3L1622.5 958.4L1624.0 958.3L1625.5 958.2L1627.0 958.2L1628.5 958.3L1630.0 958.2L1631.5 958.3L1633.0 958.2L1634.5 958.1L1636.0 958.0L1637.5 958.0L1639.0 958.0L1640.5 957.9L1642.0 957.9L1643.5 958.0L1645.0 957.9L1646.5 957.8L1648.0 957.7L1649.5 957.7L1651.0 957.7L1652.5 957.6L1654.0 957.5L1655.5 957.5L1657.0 957.5L1658.5 957.4L1660.0 957.5L1661.5 957.6L1663.0 957.5L1664.5 957.6L1666.0 957.6L1667.5 957.6L1669.0 957.6L1670.5 957.4L1672.0 957.4L1673.5 957.3L1675.0 957.5L1676.5 957.4L1678.0 957.5L1679.5 957.7L1681.0 957.6L1682.5 957.6L1684.0 957.8L1685.5 957.8L1687.0 957.7L1688.5 957.7L1690.0 957.8L1691.5 957.8L1693.0 958.1L1694.5 958.0L1696.0 958.1L1697.5 958.2L1699.0 958.3L1700.5 958.3L1702.0 958.4L1703.5 958.5L1705.0 958.5L1706.5 958.5L1708.0 958.7L1709.5 958.7L1711.0 958.6L1712.5 958.6L1714.0 958.7L1715.5 958.8L1717.0 958.6L1718.5 958.5L1720.0 958.6L1721.5 958.7L1723.0 958.8L1724.5 958.9L1726.0 958.8L1727.5 958.8L1729.0 958.8L1730.5 958.9L1732.0 958.8L1733.5 958.8L1735.0 958.7L1736.5 958.8L1738.0 958.7L1739.5 959.0L1741.0 958.9L1742.5 959.0L1744.0 958.8L1745.5 958.8L1747.0 958.9L1748.5 959.0L1750.0 959.0" fill="none" stroke="#8a3a9e" stroke-width="1.2" stroke-linejoin="round"/>
<path d="M45 58H66L55.5 67.8Z" fill="#f5901e"/>
<path d="M46 69H64.5V88H59.5L55.5 94.5L51.5 88H46Z" fill="#000" stroke="#f5901e" stroke-width="2"/>
<text x="55.5" y="84" fill="#f5901e" text-anchor="middle" font-size="15" font-weight="bold" letter-spacing="0">T</text>
<path d="M9 162H77.5L83.5 174.5L77.5 187H9Q7 187 7 185V164Q7 162 9 162Z" fill="#1e1c08" stroke="#f9ea1c" stroke-width="1.6"/><path d="M32.8 162V187" stroke="#f9ea1c" stroke-width="1.6"/>
<text x="19.3" y="177.8" fill="#f9ea1c" text-anchor="middle" font-size="12" letter-spacing="0">C 1</text><text x="57.3" y="177.8" fill="#f9ea1c" text-anchor="middle" font-size="12.3" letter-spacing="0">20 V</text>
<text x="101" y="179" fill="#f9ea1c" font-size="18.5" letter-spacing="0.6">U_loop,coil</text>
<path d="M9 396H77.5L83.5 408.5L77.5 421H9Q7 421 7 419V398Q7 396 9 396Z" fill="#141c08" stroke="#8cc832" stroke-width="1.6"/><path d="M32.8 396V421" stroke="#8cc832" stroke-width="1.6"/>
<text x="19.3" y="411.8" fill="#8cc832" text-anchor="middle" font-size="12" letter-spacing="0">C 4</text><text x="57" y="411.8" fill="#8cc832" text-anchor="middle" font-size="12.3" letter-spacing="-0.2">200 mV</text>
<text x="101" y="413.1" fill="#8cc832" font-size="18.5" letter-spacing="0.6">U_Photod</text>
<path d="M3 734.5H7M42 734.5H54" stroke="#f5901e" stroke-width="1.2"/>
<path d="M9 722.5H30L41.7 735L30 747.5H9Q7 747.5 7 745.5V724.5Q7 722.5 9 722.5Z" fill="#150c04" stroke="#f5901e" stroke-width="1.4"/>
<text x="22" y="738.6" fill="#f5901e" text-anchor="middle" font-size="12.3" letter-spacing="0">M 1</text>
<text x="53.5" y="739.7" fill="#f5901e" font-size="18.5" letter-spacing="0.6">B_t</text>
<path d="M8.5 945.5H30L42 958L30 970.5H8.5Q6 970.5 6 968V948Q6 945.5 8.5 945.5Z" fill="#702c8c"/>
<text x="22.5" y="963" fill="#fff" text-anchor="middle" font-size="13" letter-spacing="0">M 2</text>
<text x="54.2" y="962.6" fill="#8a3a9e" font-size="18.5" letter-spacing="0.2">I_pl</text>
</svg>
<div class="abs" id="logo" style="left:1786px;top:-1px;font-size:31px;font-weight:bold;letter-spacing:-2.35px;color:#fff;line-height:34px;white-space:nowrap">Tektronix</div>
<svg class="abs" style="left:1810px;top:0" width="30" height="30"><path d="M5.2 25.6L15.6 9.2H21.2L11.2 25.6Z" fill="#1fb4d8"/></svg>
<div id="side" class="abs"></div>
<div class="abs" style="left:1770px;top:29px;width:150px;text-align:center;font-size:15px;font-weight:bold;letter-spacing:.85px;line-height:20px;color:#ececf0">Add New...</div>
<div class="btn" style="left:1778px;top:54px">Cursors</div>
<div class="btn" style="left:1850px;top:54px">Callout</div>
<div class="btn" style="left:1778px;top:100px">Measure</div>
<div class="btn" style="left:1850px;top:100px">Search</div>
<div class="btn" style="left:1778px;top:146px;line-height:16px;padding-top:1px">Results<br>Table</div>
<div class="btn" style="left:1850px;top:146px">Plot</div>
<div class="sep" style="top:189px"></div>
<div class="btn" style="left:1778px;top:196px"></div>
<svg class="abs" style="left:1790px;top:196px" width="40" height="36"><rect x="8.5" y="7" width="21" height="19" fill="none" stroke="#bdbdbd" stroke-width="2" stroke-dasharray="3.2 2.4"/><circle cx="21" cy="14.8" r="4.3" fill="#2f2f2f" stroke="#c8c8c8" stroke-width="1.6"/><path d="M17.6 18.4L13.2 22" stroke="#c8c8c8" stroke-width="2.4" stroke-linecap="round"/><path d="M25.2 21.2L33.4 24.6L30 26L32.4 29.6L30.6 30.6L28.4 27L26.2 29.4Z" fill="#bdbdbd"/></svg>
<div class="btn" style="left:1850px;top:196px">More...</div>
<div class="sep" style="top:241px"></div>
<div class="abs" style="left:1760px;top:501px;width:4px;height:4px;border-radius:2px;background:#d8d8d8"></div>
<div class="abs" style="left:1760px;top:510px;width:4px;height:4px;border-radius:2px;background:#d8d8d8"></div>
<div class="abs" style="left:1760px;top:519px;width:4px;height:4px;border-radius:2px;background:#d8d8d8"></div>
<div class="badge" style="left:3px;background:#cbcbcb;color:#0a0a0a"><div class="bh" style="background:#4b4622;color:#f9ea1c">Ch 1</div><div class="bl" style="top:20.0px">5 V/div</div><div class="bl" style="top:39.2px">1 MΩ</div><div class="bl" style="top:58.4px">200 kHz</div><div class="bw">B<span>w</span></div></div>
<div class="badge" style="left:98px;background:#7f7f7f;color:#2e2e2e"><div class="bh" style="background:#26828a;color:#10262a">Ch 2</div><div class="bl" style="top:20.0px">250 mV/div</div><div class="bl" style="top:39.2px">1 MΩ</div><div class="bl" style="top:58.4px">200 kHz</div><div class="bw">B<span>w</span></div></div>
<div class="badge" style="left:193px;background:#7f7f7f;color:#2e2e2e"><div class="bh" style="background:#8e3a4c;color:#b9a3a8">Ch 3</div><div class="bl" style="top:20.0px">450 mV/div</div><div class="bl" style="top:39.2px">1 MΩ</div><div class="bl" style="top:58.4px">200 kHz</div><div class="bw">B<span>w</span></div></div>
<div class="badge" style="left:288px;background:#cbcbcb;color:#0a0a0a"><div class="bh" style="background:#3c4a26;color:#8cd22a">Ch 4</div><div class="bl" style="top:20.0px">200 mV/div</div><div class="bl" style="top:39.2px">1 MΩ</div><div class="bl" style="top:58.4px">200 kHz</div><div class="bw">B<span>w</span></div></div>
<div class="badge" style="left:383px;background:#cbcbcb;color:#0a0a0a"><div class="bh" style="background:#4c3520;color:#f5901e;font-size:15.2px;letter-spacing:.45px;line-height:18px">Math 1</div><div class="bl" style="top:20.0px">73.2 mT/div</div><div class="bl" style="top:39.2px">Intg(Ch2)…</div></div>
<div class="badge" style="left:478px;background:#cbcbcb;color:#0a0a0a"><div class="bh" style="background:#6c2a90;color:#ffffff;font-size:15.2px;letter-spacing:.45px;line-height:18px">Math 2</div><div class="bl" style="top:20.0px">495.19 A/div</div><div class="bl" style="top:39.2px">-Intg(Ch3…</div></div>
<div class="tall" style="left:1023px;width:40px"><i style="background:#f5901e"></i><b class="num">5</b></div>
<div class="tall" style="left:1068px;width:40px"><i style="background:#2a2fc0"></i><b class="num">6</b></div>
<div class="vsep" style="left:1118px"></div>
<div class="tall" style="left:1129px;width:40px"><i style="background:#a01c28"></i><b class="add">Add<br>New<br>Math</b></div>
<div class="tall" style="left:1174px;width:40px"><i style="background:#b4b4b4"></i><b class="add">Add<br>New<br>Ref</b></div>
<div class="tall" style="left:1219px;width:40px"><i style="background:#b45ae6"></i><b class="add">Add<br>New<br>Bus</b></div>
<div class="vsep" style="left:1269px"></div>
<div class="info" style="left:1280px;width:200px"><div class="ih">Horizontal</div><div class="il" style="top:18.2px;left:3px">4 ms/div</div><div class="il" style="top:18.2px;left:110px">40 ms</div><div class="il" style="top:37.4px;left:3px">SR: 1 MS/s</div><div class="il" style="top:37.4px;left:111px">1 µs/pt</div><div class="il" style="top:56.6px;left:3px">RL: 40 kpts</div><div class="il" style="top:56.6px;left:124px">3%</div><svg style="position:absolute;left:109px;top:58.5px" width="12" height="14"><path d="M1.5 1.5H9.5V8.5L5.5 12.5L1.5 8.5Z" fill="#111" stroke="#f5901e" stroke-width="1.6"/><path d="M3.6 3.6H7.4M5.5 3.6V7.6" stroke="#fff" stroke-width="1.3"/></svg></div>
<div class="info" style="left:1485px;width:160px"><div class="ih">Trigger</div><div style="position:absolute;left:4px;top:21px;width:29px;height:15px;border-radius:5px;background:#2b2fc4;border:1px solid #16186a;box-sizing:border-box;color:#fff;font-size:14px;line-height:13px;text-align:center">6</div><svg style="position:absolute;left:42px;top:21px" width="22" height="16"><path d="M1.5 12.5H6.5L13 3.5H18.5" fill="none" stroke="#3a3c9a" stroke-width="1.4"/></svg><div class="il" style="top:18.2px;left:70px">3 V</div></div>
<div class="info" style="left:1650px;width:150px"><div class="ih">Acquisition</div><div class="il" style="top:18.2px;left:3px">Manual,</div><div class="il" style="top:18.2px;left:85px">Analyze</div><div class="il" style="top:37.4px;left:3px">High Res: 16 bits</div><div class="il" style="top:56.6px;left:3px">Single: 0 /1</div></div>
<div class="vsep" style="left:1811px"></div>
<div class="abs" style="left:1822px;top:999px;width:90px;height:36px;border-radius:6px;background:#fb1f26;border:1px solid #8a3a3a;box-sizing:border-box;color:#fff;font-weight:bold;font-size:13.5px;text-align:center;line-height:32px;letter-spacing:.2px">Preview</div>
<div class="abs" style="left:1822px;top:1040px;width:90px;height:39px;border-radius:5px;background:#cbcbcb;color:#0a0a0a;font-size:14.5px;line-height:17.5px;text-align:center;padding-top:1px;box-sizing:border-box;white-space:nowrap;letter-spacing:.1px">06 May 2025<br>11:09:49 AM</div>
</body></html>
